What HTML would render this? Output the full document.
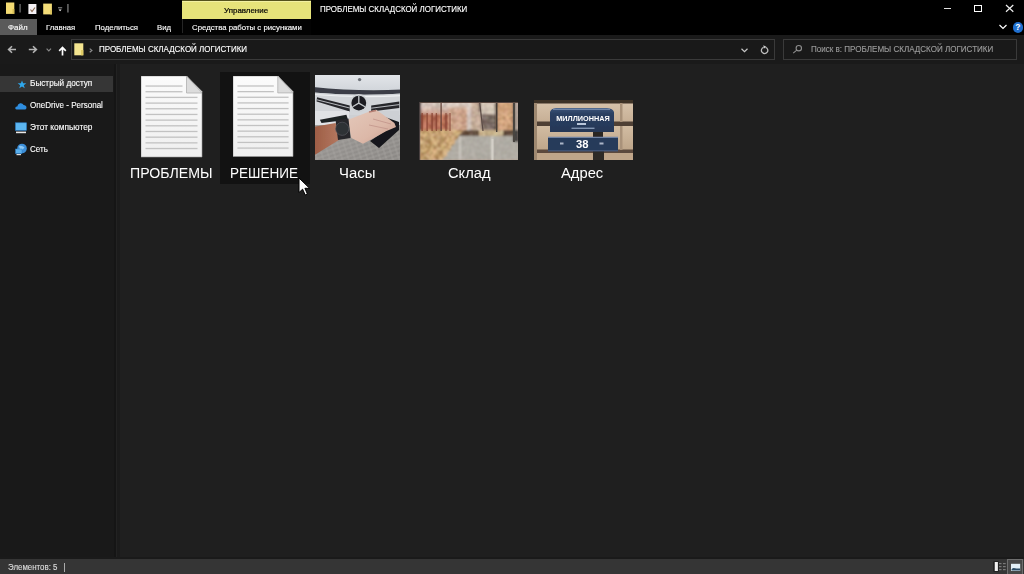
<!DOCTYPE html>
<html><head><meta charset="utf-8">
<style>
*{margin:0;padding:0;box-sizing:border-box}
html,body{width:1024px;height:574px;overflow:hidden;background:#1f1f1f;font-family:"Liberation Sans",sans-serif;color:#fff}
.a{position:absolute}
.t{position:absolute;white-space:nowrap;line-height:1;-webkit-text-stroke:0.12px currentColor}
.lbl{-webkit-text-stroke:0px currentColor}
</style></head><body>
<!-- title bar -->
<div class="a" style="left:0;top:0;width:1024px;height:35px;background:#000"></div>
<div class="a" id="yellow" style="left:182px;top:0;width:129px;height:19px;background:#e6e37a"></div><div class="a" style="left:182px;top:0;width:129px;height:1px;background:#55531c"></div><div class="a" style="left:182px;top:1px;width:129px;height:1px;background:#f3f1a2"></div>
<div class="a" style="left:182px;top:19px;width:129px;height:16px;background:#030303"></div><div class="a" style="left:182px;top:19px;width:1px;height:14px;background:#262626"></div>
<div class="a" style="left:0;top:19px;width:37px;height:16px;background:#5a5a5a"></div>

<!-- quick access icons -->
<svg class="a" style="left:0;top:0" width="80" height="18" viewBox="0 0 80 18">
<rect x="6" y="2.5" width="8.3" height="11.4" fill="#f3da72"/>
<rect x="12.5" y="9" width="1.8" height="4.9" fill="#d8bd55"/>
<rect x="19.3" y="4" width="1.6" height="8.5" fill="#5a5a5a"/>
<rect x="28.4" y="4" width="8" height="10" fill="#f4f0f4"/>
<path d="M30.5 9.5L32 11.5L35 7.5" stroke="#8a6a50" stroke-width="1.1" fill="none"/>
<rect x="43.2" y="3.6" width="8.7" height="10.8" fill="#f3dc78"/>
<rect x="50.2" y="10" width="1.7" height="4.4" fill="#d8bf5a"/>
<rect x="58" y="7" width="4.2" height="1.4" fill="#6a6a6a"/>
<path d="M58.6 9.6H61.6L60.1 11.3Z" fill="#fff"/>
<rect x="67" y="4" width="1.8" height="8.5" fill="#5a5a5a"/>
</svg>
<!-- window controls -->
<div class="a" style="left:944px;top:8px;width:7px;height:1px;background:#e0e0e0"></div>
<div class="a" style="left:974px;top:5px;width:8px;height:7px;border:1px solid #fff"></div>
<svg class="a" style="left:1005px;top:4px" width="10" height="9"><path d="M1 1L8.3 7.7M8.3 1L1 7.7" stroke="#f0f0f0" stroke-width="1.2"/></svg>
<svg class="a" style="left:999px;top:24px" width="8" height="6"><path d="M0.5 1L4 4.5L7.5 1" stroke="#fff" stroke-width="1.2" fill="none"/></svg>
<div class="a" style="left:1012.5px;top:22px;width:10.5px;height:10.5px;border-radius:50%;background:#1f6fd0"></div>
<div class="a" style="left:1012.5px;top:22px;width:10.5px;height:10.5px;line-height:10.5px;text-align:center;font-size:8.5px;font-weight:bold;color:#fff;font-family:'Liberation Sans',sans-serif">?</div>

<!-- address row -->
<div class="a" style="left:0;top:35px;width:1024px;height:29px;background:#1a1a1a"></div>
<svg class="a" style="left:7px;top:45px" width="10" height="9"><path d="M9 4.5H1.8M5 1.2L1.6 4.5L5 7.8" stroke="#b4b4b4" stroke-width="1.6" fill="none"/></svg>
<svg class="a" style="left:27.5px;top:45px" width="10" height="9"><path d="M0.8 4.5H8.2M5 1.2L8.4 4.5L5 7.8" stroke="#b4b4b4" stroke-width="1.6" fill="none"/></svg>
<svg class="a" style="left:45.5px;top:47.5px" width="6" height="4"><path d="M0.6 0.6L2.8 2.8L5 0.6" stroke="#8a8a8a" stroke-width="1.2" fill="none"/></svg>
<svg class="a" style="left:58px;top:45.5px" width="9" height="10"><path d="M4.5 9.5V1.8M1.2 4.8L4.5 1.5L7.8 4.8" stroke="#fff" stroke-width="1.7" fill="none"/></svg>
<div class="a" style="left:71px;top:39px;width:704px;height:21px;border:1px solid #3a3a3a;background:#191919"></div>
<svg class="a" style="left:74px;top:42.5px" width="10" height="13"><rect x="0.3" y="0.3" width="9" height="12" fill="#f4e590"/><rect x="7" y="7" width="2.3" height="5.3" fill="#e0cc66"/></svg>
<svg class="a" style="left:88.5px;top:47.5px" width="4" height="5"><path d="M0.7 0.6L2.9 2.4L0.7 4.2" stroke="#8e8e8e" stroke-width="1.2" fill="none"/></svg>
<svg class="a" style="left:740.5px;top:48px" width="7" height="5"><path d="M0.5 0.8L3.5 3.6L6.5 0.8" stroke="#c8c8c8" stroke-width="1.2" fill="none"/></svg>
<svg class="a" style="left:760px;top:45px" width="9" height="10"><path d="M3.6 2.3A3.2 3.2 0 1 0 5.6 2.3" stroke="#bdbdbd" stroke-width="1.3" fill="none"/><path d="M3.3 0.2L6.4 1.8L4 3.6Z" fill="#cfcfcf"/></svg>
<div class="a" style="left:783px;top:39px;width:234px;height:21px;border:1px solid #3a3a3a;background:#191919"></div>
<svg class="a" style="left:792px;top:44px" width="11" height="11"><circle cx="6.8" cy="4.2" r="2.7" stroke="#8e8e8e" stroke-width="1.1" fill="none"/><path d="M4.8 6.2L1.2 9.2" stroke="#8e8e8e" stroke-width="1.1"/></svg>

<!-- nav pane -->
<div class="a" style="left:0;top:64px;width:115px;height:495px;background:#191919"></div>
<div class="a" style="left:114px;top:64px;width:1.5px;height:495px;background:#151515"></div><div class="a" style="left:115.5px;top:64px;width:2px;height:495px;background:#222222"></div><div class="a" style="left:117px;top:64px;width:3px;height:495px;background:#1b1b1b"></div>
<div class="a" style="left:0;top:76px;width:113px;height:16px;background:#363636"></div>


<!-- nav icons -->
<svg class="a" style="left:17px;top:79.5px" width="10" height="9" viewBox="0 0 12 11"><path d="M6 0.5L7.4 4H11.3L8.2 6.4L9.4 10.2L6 7.9L2.6 10.2L3.8 6.4L0.7 4H4.6Z" fill="#2ea6ea"/></svg>
<svg class="a" style="left:15px;top:101px" width="12" height="9" viewBox="0 0 12 9"><path d="M1.5 8.5Q0 8.5 0.3 6.8Q0.7 5.3 2.3 5.4Q2.6 3 5 2.3Q7.5 1.8 8.6 4Q10.5 3.9 11.3 5.6Q12 8.3 10 8.5Z" fill="#2f8ee0"/></svg>
<svg class="a" style="left:15px;top:122px" width="12" height="12" viewBox="0 0 12 12"><rect x="0.5" y="0.8" width="11" height="7.5" fill="#5cb6f0" stroke="#2b7fc8" stroke-width="0.6"/><rect x="1" y="9.6" width="10" height="1.6" fill="#e8e8e8"/></svg>
<svg class="a" style="left:15px;top:143px" width="12" height="13" viewBox="0 0 12 13"><circle cx="7" cy="5.5" r="4.8" fill="#3d8fd8"/><path d="M4 3Q7 2 9.5 4.5Q8 7 5 7Z" fill="#8cc8f4"/><rect x="0.5" y="6" width="6.5" height="4.6" fill="#59b0ee" stroke="#2f7cc4" stroke-width="0.5"/><rect x="1.5" y="11" width="4.5" height="1.2" fill="#ddd"/></svg>
<!-- content -->
<div class="a" style="left:120px;top:64px;width:904px;height:495px;background:#1f1f1f"></div><div class="a" style="left:0;top:557px;width:1024px;height:2px;background:#1a1a1a"></div>
<div class="a" style="left:220px;top:72px;width:90px;height:112px;background:#121212"></div>


<!-- doc icons -->
<svg class="a" style="left:141px;top:76px" width="62" height="82" viewBox="0 0 62 82"><defs><linearGradient id="pg" x1="0" y1="0" x2="0" y2="1"><stop offset="0" stop-color="#fbfbfb"/><stop offset="1" stop-color="#efefef"/></linearGradient></defs>
<path d="M0 0H45.5L61 15.5V81H0Z" fill="url(#pg)" stroke="#9a9a9a" stroke-width="0.6"/>
<rect x="4.5" y="9.40" width="37.0" height="1.3" fill="#c2c2c2"/><rect x="4.5" y="15.08" width="37.0" height="1.3" fill="#c2c2c2"/><rect x="4.5" y="20.76" width="52.0" height="1.3" fill="#c2c2c2"/><rect x="4.5" y="26.44" width="52.0" height="1.3" fill="#c2c2c2"/><rect x="4.5" y="32.12" width="52.0" height="1.3" fill="#c2c2c2"/><rect x="4.5" y="37.80" width="52.0" height="1.3" fill="#c2c2c2"/><rect x="4.5" y="43.48" width="52.0" height="1.3" fill="#c2c2c2"/><rect x="4.5" y="49.16" width="52.0" height="1.3" fill="#c2c2c2"/><rect x="4.5" y="54.84" width="52.0" height="1.3" fill="#c2c2c2"/><rect x="4.5" y="60.52" width="52.0" height="1.3" fill="#c2c2c2"/><rect x="4.5" y="66.20" width="52.0" height="1.3" fill="#c2c2c2"/><rect x="4.5" y="71.88" width="52.0" height="1.3" fill="#c2c2c2"/>
<path d="M45.5 0V17H61Z" fill="#dcdcdc" stroke="#b0b0b0" stroke-width="0.8"/></svg>
<svg class="a" style="left:232.8px;top:76px" width="61" height="81.5" viewBox="0 0 62 82" preserveAspectRatio="none"><defs><linearGradient id="pg2" x1="0" y1="0" x2="0" y2="1"><stop offset="0" stop-color="#fbfbfb"/><stop offset="1" stop-color="#efefef"/></linearGradient></defs>
<path d="M0 0H45.5L61 15.5V81H0Z" fill="url(#pg2)" stroke="#9a9a9a" stroke-width="0.6"/>
<rect x="4.5" y="9.40" width="37.0" height="1.3" fill="#c2c2c2"/><rect x="4.5" y="15.08" width="37.0" height="1.3" fill="#c2c2c2"/><rect x="4.5" y="20.76" width="52.0" height="1.3" fill="#c2c2c2"/><rect x="4.5" y="26.44" width="52.0" height="1.3" fill="#c2c2c2"/><rect x="4.5" y="32.12" width="52.0" height="1.3" fill="#c2c2c2"/><rect x="4.5" y="37.80" width="52.0" height="1.3" fill="#c2c2c2"/><rect x="4.5" y="43.48" width="52.0" height="1.3" fill="#c2c2c2"/><rect x="4.5" y="49.16" width="52.0" height="1.3" fill="#c2c2c2"/><rect x="4.5" y="54.84" width="52.0" height="1.3" fill="#c2c2c2"/><rect x="4.5" y="60.52" width="52.0" height="1.3" fill="#c2c2c2"/><rect x="4.5" y="66.20" width="52.0" height="1.3" fill="#c2c2c2"/><rect x="4.5" y="71.88" width="52.0" height="1.3" fill="#c2c2c2"/>
<path d="M45.5 0V17H61Z" fill="#dcdcdc" stroke="#b0b0b0" stroke-width="0.8"/></svg>
<!-- Часы photo -->
<svg class="a" style="left:315px;top:75px" width="85" height="85" viewBox="0 0 85 85">
<defs><filter id="bl1" x="-5%" y="-5%" width="110%" height="110%"><feGaussianBlur stdDeviation="0.6"/></filter>
<linearGradient id="hood" x1="0" y1="0" x2="0" y2="1"><stop offset="0" stop-color="#e4e7eb"/><stop offset="1" stop-color="#d2d6db"/></linearGradient>
<linearGradient id="pave" x1="0" y1="0" x2="1" y2="1"><stop offset="0" stop-color="#9d9a97"/><stop offset="1" stop-color="#8a8784"/></linearGradient>
<linearGradient id="arm" x1="0" y1="0" x2="1" y2="0"><stop offset="0" stop-color="#9c5c44"/><stop offset="1" stop-color="#b47860"/></linearGradient>
<linearGradient id="skin" x1="0" y1="0" x2="1" y2="1"><stop offset="0" stop-color="#e4c8ba"/><stop offset="0.6" stop-color="#dcb8a8"/><stop offset="1" stop-color="#c8988a"/></linearGradient>
<pattern id="pv" width="6" height="4" patternUnits="userSpaceOnUse" patternTransform="rotate(-18)"><rect width="6" height="4" fill="none" stroke="#aeaba7" stroke-width="0.5"/></pattern>
<clipPath id="c1"><rect width="85" height="85"/></clipPath></defs>
<g clip-path="url(#c1)"><g filter="url(#bl1)">
<rect x="-2" y="-2" width="90" height="90" fill="#cdd0d4"/>
<rect x="-2" y="-2" width="90" height="17" fill="url(#hood)"/>
<circle cx="44.6" cy="4.6" r="1.7" fill="#6e737a"/>
<path d="M-2 12Q44 17 88 14.5V18.5Q44 21.5 -2 17.5Z" fill="#3a3e46"/>
<path d="M-2 17.5Q44 21.5 88 18.5V40H-2Z" fill="#d2d5d9"/>
<path d="M-2 19.5Q44 23 88 20.5" stroke="#eef0f2" stroke-width="1.2" fill="none"/>
<path d="M2 22.3L34.7 30.6V36.4L1.6 26.5Z" fill="#25272c"/>
<path d="M2 24.8L34.7 33" stroke="#c8cbcf" stroke-width="0.9"/>
<path d="M56.2 30.6L84.3 26.5V33L56.2 36.4Z" fill="#25272c"/>
<path d="M56.2 33.2L84.3 29.6" stroke="#c8cbcf" stroke-width="0.9"/>
<circle cx="43.8" cy="28.1" r="9.1" fill="#cfd2d6"/>
<circle cx="43.8" cy="28.1" r="7.4" fill="#1d1f23"/>
<path d="M43.8 20.9V28.1L37.6 31.7M43.8 28.1L50 31.7" stroke="#c6c9cd" stroke-width="1.3" fill="none"/>
<path d="M-2 36H34V50H-2Z" fill="#e0e2e5"/>
<path d="M84 36H56V50H84Z" fill="#cdd0d4"/>
<path d="M4.9 44.7L31.4 39.7L33 44.7L6.5 48Z" fill="#1e2024"/>
<rect x="-2" y="50" width="90" height="38" fill="url(#pave)"/>
<rect x="-2" y="50" width="90" height="38" fill="url(#pv)"/>
<path d="M70 42L84 47V55L64 73L55 66L70 56Z" fill="#17181b"/>
<path d="M-2 52L20.6 48L24.7 64.5L-2 81Z" fill="url(#arm)"/>
<path d="M33 44.7L54.5 36.4L61.2 34.7L72.7 43L79.4 48L81 52L71 56.3L56.2 64.5L48 68.7L36.3 62.9Z" fill="url(#skin)"/>
<path d="M54 37L61 35.5" stroke="#b57e72" stroke-width="1.6" fill="none"/>
<path d="M58 44L76 49M54 50L73 54" stroke="#c1948a" stroke-width="0.8" fill="none"/>
<path d="M20.6 45.5L33.5 43.5L35.5 62.9L23 65Z" fill="#26272a"/>
<circle cx="27.2" cy="53.8" r="6.6" fill="#2f3136"/>
<circle cx="27.2" cy="53.8" r="6.6" fill="none" stroke="#5a5d63" stroke-width="0.6"/>
</g></g>
</svg>

<!-- Склад photo -->
<svg class="a" style="left:419px;top:102px" width="99" height="58" viewBox="0 0 99 58">
<defs><filter id="bl2" x="-5%" y="-5%" width="110%" height="110%"><feGaussianBlur stdDeviation="0.9"/></filter>
<filter id="bl2b" x="-5%" y="-5%" width="110%" height="110%"><feGaussianBlur stdDeviation="0.45"/></filter>
<clipPath id="c2"><rect width="99" height="58"/></clipPath></defs>
<g clip-path="url(#c2)"><g filter="url(#bl2)" shape-rendering="crispEdges">
<rect x="-2" y="-2" width="103" height="62" fill="#b8a090"/>
<rect x="0" y="0" width="2" height="2" fill="#4f433e"/><rect x="2" y="0" width="2" height="2" fill="#beacaa"/><rect x="4" y="0" width="2" height="2" fill="#ecdbcf"/><rect x="6" y="0" width="2" height="2" fill="#c2b0ac"/><rect x="8" y="0" width="2" height="2" fill="#daccc2"/><rect x="10" y="0" width="2" height="2" fill="#e6d3ca"/><rect x="12" y="0" width="2" height="2" fill="#d2beba"/><rect x="14" y="0" width="2" height="2" fill="#e7dccf"/><rect x="16" y="0" width="2" height="2" fill="#c5b7b4"/><rect x="18" y="0" width="2" height="2" fill="#bcb2a5"/><rect x="20" y="0" width="2" height="2" fill="#dcd0c4"/><rect x="22" y="0" width="2" height="2" fill="#edd9d6"/><rect x="24" y="0" width="2" height="2" fill="#d7cfc0"/><rect x="26" y="0" width="2" height="2" fill="#c6b6b2"/><rect x="28" y="0" width="2" height="2" fill="#d5c1ba"/><rect x="30" y="0" width="2" height="2" fill="#e9d7cc"/><rect x="32" y="0" width="2" height="2" fill="#ebdbd0"/><rect x="34" y="0" width="2" height="2" fill="#ccbbb5"/><rect x="36" y="0" width="2" height="2" fill="#dccfc7"/><rect x="38" y="0" width="2" height="2" fill="#e5d6cd"/><rect x="40" y="0" width="2" height="2" fill="#d1bfb7"/><rect x="42" y="0" width="2" height="2" fill="#decdc2"/><rect x="44" y="0" width="2" height="2" fill="#e5dcd1"/><rect x="46" y="0" width="2" height="2" fill="#c4b7af"/><rect x="48" y="0" width="2" height="2" fill="#e3d7d0"/><rect x="50" y="0" width="2" height="2" fill="#e3d5cc"/><rect x="52" y="0" width="2" height="2" fill="#d0b8a3"/><rect x="54" y="0" width="2" height="2" fill="#c5a79a"/><rect x="56" y="0" width="2" height="2" fill="#baa08e"/><rect x="58" y="0" width="2" height="2" fill="#bda18e"/><rect x="60" y="0" width="2" height="2" fill="#5f504a"/><rect x="62" y="0" width="2" height="2" fill="#e5d8c8"/><rect x="64" y="0" width="2" height="2" fill="#e6d9c7"/><rect x="66" y="0" width="2" height="2" fill="#c9bcad"/><rect x="68" y="0" width="2" height="2" fill="#d0c2ba"/><rect x="70" y="0" width="2" height="2" fill="#d0bcaf"/><rect x="72" y="0" width="2" height="2" fill="#c8b9af"/><rect x="74" y="0" width="2" height="2" fill="#e6d6c4"/><rect x="76" y="0" width="2" height="2" fill="#463a36"/><rect x="78" y="0" width="2" height="2" fill="#d5a583"/><rect x="80" y="0" width="2" height="2" fill="#d5ac87"/><rect x="82" y="0" width="2" height="2" fill="#e5b98e"/><rect x="84" y="0" width="2" height="2" fill="#e0b389"/><rect x="86" y="0" width="2" height="2" fill="#d1a080"/><rect x="88" y="0" width="2" height="2" fill="#ca9f76"/><rect x="90" y="0" width="2" height="2" fill="#daaf8d"/><rect x="92" y="0" width="2" height="2" fill="#dcae8a"/><rect x="94" y="0" width="2" height="2" fill="#514944"/><rect x="96" y="0" width="2" height="2" fill="#b4a69e"/><rect x="98" y="0" width="2" height="2" fill="#c1b2a6"/><rect x="0" y="2" width="2" height="2" fill="#4a3d39"/><rect x="2" y="2" width="2" height="2" fill="#d9cdc4"/><rect x="4" y="2" width="2" height="2" fill="#cfc2bd"/><rect x="6" y="2" width="2" height="2" fill="#c5b8a9"/><rect x="8" y="2" width="2" height="2" fill="#c8b5ad"/><rect x="10" y="2" width="2" height="2" fill="#c1afa6"/><rect x="12" y="2" width="2" height="2" fill="#d0bcb5"/><rect x="14" y="2" width="2" height="2" fill="#e6d8ca"/><rect x="16" y="2" width="2" height="2" fill="#c9beb0"/><rect x="18" y="2" width="2" height="2" fill="#c9b5ab"/><rect x="20" y="2" width="2" height="2" fill="#c0b3a5"/><rect x="22" y="2" width="2" height="2" fill="#e7dad5"/><rect x="24" y="2" width="2" height="2" fill="#bbaba7"/><rect x="26" y="2" width="2" height="2" fill="#c2b7b0"/><rect x="28" y="2" width="2" height="2" fill="#e9dcd0"/><rect x="30" y="2" width="2" height="2" fill="#d6cdc4"/><rect x="32" y="2" width="2" height="2" fill="#cfc1ba"/><rect x="34" y="2" width="2" height="2" fill="#e1d1c5"/><rect x="36" y="2" width="2" height="2" fill="#e1d7cc"/><rect x="38" y="2" width="2" height="2" fill="#e9dad0"/><rect x="40" y="2" width="2" height="2" fill="#c2b5a8"/><rect x="42" y="2" width="2" height="2" fill="#cdbdb1"/><rect x="44" y="2" width="2" height="2" fill="#d4c4ba"/><rect x="46" y="2" width="2" height="2" fill="#dccbc2"/><rect x="48" y="2" width="2" height="2" fill="#c6bcb2"/><rect x="50" y="2" width="2" height="2" fill="#e8dbce"/><rect x="52" y="2" width="2" height="2" fill="#d8c2ad"/><rect x="54" y="2" width="2" height="2" fill="#dbc4b1"/><rect x="56" y="2" width="2" height="2" fill="#c7b29c"/><rect x="58" y="2" width="2" height="2" fill="#b79c8d"/><rect x="60" y="2" width="2" height="2" fill="#5f524c"/><rect x="62" y="2" width="2" height="2" fill="#dacaba"/><rect x="64" y="2" width="2" height="2" fill="#c6b7a7"/><rect x="66" y="2" width="2" height="2" fill="#d4c5b5"/><rect x="68" y="2" width="2" height="2" fill="#daccbc"/><rect x="70" y="2" width="2" height="2" fill="#e2d2c4"/><rect x="72" y="2" width="2" height="2" fill="#ddcbbd"/><rect x="74" y="2" width="2" height="2" fill="#bfb3a6"/><rect x="76" y="2" width="2" height="2" fill="#3f3631"/><rect x="78" y="2" width="2" height="2" fill="#bb926d"/><rect x="80" y="2" width="2" height="2" fill="#d6a480"/><rect x="82" y="2" width="2" height="2" fill="#daa683"/><rect x="84" y="2" width="2" height="2" fill="#c19c6e"/><rect x="86" y="2" width="2" height="2" fill="#d5ad80"/><rect x="88" y="2" width="2" height="2" fill="#c4966c"/><rect x="90" y="2" width="2" height="2" fill="#c19a73"/><rect x="92" y="2" width="2" height="2" fill="#cc9a74"/><rect x="94" y="2" width="2" height="2" fill="#514a44"/><rect x="96" y="2" width="2" height="2" fill="#b7a69e"/><rect x="98" y="2" width="2" height="2" fill="#bdada5"/><rect x="0" y="4" width="2" height="2" fill="#524542"/><rect x="2" y="4" width="2" height="2" fill="#e1c7c2"/><rect x="4" y="4" width="2" height="2" fill="#c3b4a9"/><rect x="6" y="4" width="2" height="2" fill="#ead5cc"/><rect x="8" y="4" width="2" height="2" fill="#d0bcb4"/><rect x="10" y="4" width="2" height="2" fill="#ead5cd"/><rect x="12" y="4" width="2" height="2" fill="#c3b1a3"/><rect x="14" y="4" width="2" height="2" fill="#ccb1a9"/><rect x="16" y="4" width="2" height="2" fill="#bfafa6"/><rect x="18" y="4" width="2" height="2" fill="#c0ada7"/><rect x="20" y="4" width="2" height="2" fill="#c5b6a9"/><rect x="22" y="4" width="2" height="2" fill="#cab6a8"/><rect x="24" y="4" width="2" height="2" fill="#c1b5aa"/><rect x="26" y="4" width="2" height="2" fill="#cbb5a8"/><rect x="28" y="4" width="2" height="2" fill="#e2cec1"/><rect x="30" y="4" width="2" height="2" fill="#e2cabd"/><rect x="32" y="4" width="2" height="2" fill="#dac7b7"/><rect x="34" y="4" width="2" height="2" fill="#d8c2b2"/><rect x="36" y="4" width="2" height="2" fill="#ccb1a4"/><rect x="38" y="4" width="2" height="2" fill="#d4b9ae"/><rect x="40" y="4" width="2" height="2" fill="#cab3a0"/><rect x="42" y="4" width="2" height="2" fill="#d4baa9"/><rect x="44" y="4" width="2" height="2" fill="#c7ae9b"/><rect x="46" y="4" width="2" height="2" fill="#d5bdaf"/><rect x="48" y="4" width="2" height="2" fill="#daccc7"/><rect x="50" y="4" width="2" height="2" fill="#dcd1c5"/><rect x="52" y="4" width="2" height="2" fill="#cdb7a8"/><rect x="54" y="4" width="2" height="2" fill="#b29c86"/><rect x="56" y="4" width="2" height="2" fill="#cfb7a1"/><rect x="58" y="4" width="2" height="2" fill="#c2ad98"/><rect x="60" y="4" width="2" height="2" fill="#574842"/><rect x="62" y="4" width="2" height="2" fill="#e4d3c9"/><rect x="64" y="4" width="2" height="2" fill="#d3c9bd"/><rect x="66" y="4" width="2" height="2" fill="#ccbcab"/><rect x="68" y="4" width="2" height="2" fill="#ddd3c1"/><rect x="70" y="4" width="2" height="2" fill="#c9b9ab"/><rect x="72" y="4" width="2" height="2" fill="#ecddcb"/><rect x="74" y="4" width="2" height="2" fill="#cbbfac"/><rect x="76" y="4" width="2" height="2" fill="#423832"/><rect x="78" y="4" width="2" height="2" fill="#c79c6e"/><rect x="80" y="4" width="2" height="2" fill="#c79673"/><rect x="82" y="4" width="2" height="2" fill="#d0a97e"/><rect x="84" y="4" width="2" height="2" fill="#c99c77"/><rect x="86" y="4" width="2" height="2" fill="#e3b28c"/><rect x="88" y="4" width="2" height="2" fill="#cda579"/><rect x="90" y="4" width="2" height="2" fill="#daaf85"/><rect x="92" y="4" width="2" height="2" fill="#ca9c72"/><rect x="94" y="4" width="2" height="2" fill="#524a44"/><rect x="96" y="4" width="2" height="2" fill="#bdb0a3"/><rect x="98" y="4" width="2" height="2" fill="#aa978f"/><rect x="0" y="6" width="2" height="2" fill="#4c403e"/><rect x="2" y="6" width="2" height="2" fill="#d0b5b0"/><rect x="4" y="6" width="2" height="2" fill="#e6cabe"/><rect x="6" y="6" width="2" height="2" fill="#dfc5b6"/><rect x="8" y="6" width="2" height="2" fill="#d3beab"/><rect x="10" y="6" width="2" height="2" fill="#e6cab9"/><rect x="12" y="6" width="2" height="2" fill="#b89f95"/><rect x="14" y="6" width="2" height="2" fill="#dabcb2"/><rect x="16" y="6" width="2" height="2" fill="#c9ac9d"/><rect x="18" y="6" width="2" height="2" fill="#cdb2a2"/><rect x="20" y="6" width="2" height="2" fill="#dbc2b9"/><rect x="22" y="6" width="2" height="2" fill="#c3aa95"/><rect x="24" y="6" width="2" height="2" fill="#e4c7be"/><rect x="26" y="6" width="2" height="2" fill="#ddc3b9"/><rect x="28" y="6" width="2" height="2" fill="#c2a299"/><rect x="30" y="6" width="2" height="2" fill="#dcb6a1"/><rect x="32" y="6" width="2" height="2" fill="#bb9a83"/><rect x="34" y="6" width="2" height="2" fill="#ba9781"/><rect x="36" y="6" width="2" height="2" fill="#e0bda9"/><rect x="38" y="6" width="2" height="2" fill="#ba9982"/><rect x="40" y="6" width="2" height="2" fill="#d9b7a1"/><rect x="42" y="6" width="2" height="2" fill="#bb9881"/><rect x="44" y="6" width="2" height="2" fill="#ddb4a0"/><rect x="46" y="6" width="2" height="2" fill="#dcbba4"/><rect x="48" y="6" width="2" height="2" fill="#e8dacf"/><rect x="50" y="6" width="2" height="2" fill="#d7c5bd"/><rect x="52" y="6" width="2" height="2" fill="#c2a594"/><rect x="54" y="6" width="2" height="2" fill="#d8c0b0"/><rect x="56" y="6" width="2" height="2" fill="#bba690"/><rect x="58" y="6" width="2" height="2" fill="#bca893"/><rect x="60" y="6" width="2" height="2" fill="#54443f"/><rect x="62" y="6" width="2" height="2" fill="#d4c5b3"/><rect x="64" y="6" width="2" height="2" fill="#d2c3b7"/><rect x="66" y="6" width="2" height="2" fill="#c7b5aa"/><rect x="68" y="6" width="2" height="2" fill="#c7baaf"/><rect x="70" y="6" width="2" height="2" fill="#d5cbba"/><rect x="72" y="6" width="2" height="2" fill="#c8bdac"/><rect x="74" y="6" width="2" height="2" fill="#ccbdad"/><rect x="76" y="6" width="2" height="2" fill="#4b3f3b"/><rect x="78" y="6" width="2" height="2" fill="#daac80"/><rect x="80" y="6" width="2" height="2" fill="#c29872"/><rect x="82" y="6" width="2" height="2" fill="#c79776"/><rect x="84" y="6" width="2" height="2" fill="#c59c77"/><rect x="86" y="6" width="2" height="2" fill="#c59572"/><rect x="88" y="6" width="2" height="2" fill="#c99b73"/><rect x="90" y="6" width="2" height="2" fill="#c18f6c"/><rect x="92" y="6" width="2" height="2" fill="#d5a67f"/><rect x="94" y="6" width="2" height="2" fill="#524b44"/><rect x="96" y="6" width="2" height="2" fill="#b3a49d"/><rect x="98" y="6" width="2" height="2" fill="#b7a7a0"/><rect x="0" y="8" width="2" height="2" fill="#524642"/><rect x="2" y="8" width="2" height="2" fill="#c8a296"/><rect x="4" y="8" width="2" height="2" fill="#dabcab"/><rect x="6" y="8" width="2" height="2" fill="#d9b5a6"/><rect x="8" y="8" width="2" height="2" fill="#b79586"/><rect x="10" y="8" width="2" height="2" fill="#dab5ac"/><rect x="12" y="8" width="2" height="2" fill="#cfaa9e"/><rect x="14" y="8" width="2" height="2" fill="#c7a696"/><rect x="16" y="8" width="2" height="2" fill="#d5b49e"/><rect x="18" y="8" width="2" height="2" fill="#b99c90"/><rect x="20" y="8" width="2" height="2" fill="#caa69b"/><rect x="22" y="8" width="2" height="2" fill="#b6978b"/><rect x="24" y="8" width="2" height="2" fill="#b69483"/><rect x="26" y="8" width="2" height="2" fill="#c1a193"/><rect x="28" y="8" width="2" height="2" fill="#d1aa9b"/><rect x="30" y="8" width="2" height="2" fill="#c8a286"/><rect x="32" y="8" width="2" height="2" fill="#be987e"/><rect x="34" y="8" width="2" height="2" fill="#e0b69d"/><rect x="36" y="8" width="2" height="2" fill="#e0b7a2"/><rect x="38" y="8" width="2" height="2" fill="#d6ab98"/><rect x="40" y="8" width="2" height="2" fill="#e0b399"/><rect x="42" y="8" width="2" height="2" fill="#c79b84"/><rect x="44" y="8" width="2" height="2" fill="#b38d74"/><rect x="46" y="8" width="2" height="2" fill="#e0ba99"/><rect x="48" y="8" width="2" height="2" fill="#cfbcb7"/><rect x="50" y="8" width="2" height="2" fill="#ddccc6"/><rect x="52" y="8" width="2" height="2" fill="#b9a394"/><rect x="54" y="8" width="2" height="2" fill="#ccb3a0"/><rect x="56" y="8" width="2" height="2" fill="#c5ac9b"/><rect x="58" y="8" width="2" height="2" fill="#bfa196"/><rect x="60" y="8" width="2" height="2" fill="#594844"/><rect x="62" y="8" width="2" height="2" fill="#c7beaa"/><rect x="64" y="8" width="2" height="2" fill="#cabeb0"/><rect x="66" y="8" width="2" height="2" fill="#c8b9a9"/><rect x="68" y="8" width="2" height="2" fill="#cbbdae"/><rect x="70" y="8" width="2" height="2" fill="#dacfbb"/><rect x="72" y="8" width="2" height="2" fill="#cfc3b1"/><rect x="74" y="8" width="2" height="2" fill="#d3caba"/><rect x="76" y="8" width="2" height="2" fill="#473b38"/><rect x="78" y="8" width="2" height="2" fill="#caa074"/><rect x="80" y="8" width="2" height="2" fill="#d2a27a"/><rect x="82" y="8" width="2" height="2" fill="#d3a579"/><rect x="84" y="8" width="2" height="2" fill="#c79a6d"/><rect x="86" y="8" width="2" height="2" fill="#d7a285"/><rect x="88" y="8" width="2" height="2" fill="#d6ae86"/><rect x="90" y="8" width="2" height="2" fill="#d2a883"/><rect x="92" y="8" width="2" height="2" fill="#c79a7c"/><rect x="94" y="8" width="2" height="2" fill="#5c554e"/><rect x="96" y="8" width="2" height="2" fill="#b7aa9e"/><rect x="98" y="8" width="2" height="2" fill="#b09f97"/><rect x="0" y="10" width="2" height="2" fill="#554846"/><rect x="2" y="10" width="2" height="2" fill="#c49e8a"/><rect x="4" y="10" width="2" height="2" fill="#d5a998"/><rect x="6" y="10" width="2" height="2" fill="#c4a08e"/><rect x="8" y="10" width="2" height="2" fill="#dab3a1"/><rect x="10" y="10" width="2" height="2" fill="#e1b1a3"/><rect x="12" y="10" width="2" height="2" fill="#c2998a"/><rect x="14" y="10" width="2" height="2" fill="#dbb3a3"/><rect x="16" y="10" width="2" height="2" fill="#cfad94"/><rect x="18" y="10" width="2" height="2" fill="#d2aa9c"/><rect x="20" y="10" width="2" height="2" fill="#dbb39b"/><rect x="22" y="10" width="2" height="2" fill="#e3b3a3"/><rect x="24" y="10" width="2" height="2" fill="#d6af9a"/><rect x="26" y="10" width="2" height="2" fill="#c9a48d"/><rect x="28" y="10" width="2" height="2" fill="#c89e8f"/><rect x="30" y="10" width="2" height="2" fill="#e6bda6"/><rect x="32" y="10" width="2" height="2" fill="#af8d74"/><rect x="34" y="10" width="2" height="2" fill="#b08a77"/><rect x="36" y="10" width="2" height="2" fill="#c49e83"/><rect x="38" y="10" width="2" height="2" fill="#d8b194"/><rect x="40" y="10" width="2" height="2" fill="#c49880"/><rect x="42" y="10" width="2" height="2" fill="#c89d8b"/><rect x="44" y="10" width="2" height="2" fill="#c59c85"/><rect x="46" y="10" width="2" height="2" fill="#daad98"/><rect x="48" y="10" width="2" height="2" fill="#e5d8cf"/><rect x="50" y="10" width="2" height="2" fill="#cfc1bb"/><rect x="52" y="10" width="2" height="2" fill="#bda292"/><rect x="54" y="10" width="2" height="2" fill="#b59c85"/><rect x="56" y="10" width="2" height="2" fill="#c9b79e"/><rect x="58" y="10" width="2" height="2" fill="#c8b8a3"/><rect x="60" y="10" width="2" height="2" fill="#c3ae9a"/><rect x="62" y="10" width="2" height="2" fill="#dfd2c4"/><rect x="64" y="10" width="2" height="2" fill="#c1b8a9"/><rect x="66" y="10" width="2" height="2" fill="#d1c0b5"/><rect x="68" y="10" width="2" height="2" fill="#e1d8c8"/><rect x="70" y="10" width="2" height="2" fill="#e0cfc2"/><rect x="72" y="10" width="2" height="2" fill="#ddd2c2"/><rect x="74" y="10" width="2" height="2" fill="#d9cbbe"/><rect x="76" y="10" width="2" height="2" fill="#463b37"/><rect x="78" y="10" width="2" height="2" fill="#cea081"/><rect x="80" y="10" width="2" height="2" fill="#d4ab84"/><rect x="82" y="10" width="2" height="2" fill="#d7ac8b"/><rect x="84" y="10" width="2" height="2" fill="#ce9f81"/><rect x="86" y="10" width="2" height="2" fill="#daad8a"/><rect x="88" y="10" width="2" height="2" fill="#d5a880"/><rect x="90" y="10" width="2" height="2" fill="#c4966c"/><rect x="92" y="10" width="2" height="2" fill="#bd8f68"/><rect x="94" y="10" width="2" height="2" fill="#514b44"/><rect x="96" y="10" width="2" height="2" fill="#b6a69c"/><rect x="98" y="10" width="2" height="2" fill="#a9978f"/><rect x="0" y="12" width="2" height="2" fill="#544743"/><rect x="2" y="12" width="2" height="2" fill="#843c2b"/><rect x="4" y="12" width="2" height="2" fill="#ad5e4a"/><rect x="6" y="12" width="2" height="2" fill="#a46043"/><rect x="8" y="12" width="2" height="2" fill="#a65b44"/><rect x="10" y="12" width="2" height="2" fill="#c88163"/><rect x="12" y="12" width="2" height="2" fill="#8b4637"/><rect x="14" y="12" width="2" height="2" fill="#db9279"/><rect x="16" y="12" width="2" height="2" fill="#914b3d"/><rect x="18" y="12" width="2" height="2" fill="#a05f46"/><rect x="20" y="12" width="2" height="2" fill="#c88169"/><rect x="22" y="12" width="2" height="2" fill="#d3896b"/><rect x="24" y="12" width="2" height="2" fill="#ca856b"/><rect x="26" y="12" width="2" height="2" fill="#863d2e"/><rect x="28" y="12" width="2" height="2" fill="#b26e50"/><rect x="30" y="12" width="2" height="2" fill="#b99279"/><rect x="32" y="12" width="2" height="2" fill="#cba98b"/><rect x="34" y="12" width="2" height="2" fill="#c4a189"/><rect x="36" y="12" width="2" height="2" fill="#dab699"/><rect x="38" y="12" width="2" height="2" fill="#ce9f8a"/><rect x="40" y="12" width="2" height="2" fill="#b7957d"/><rect x="42" y="12" width="2" height="2" fill="#bb9676"/><rect x="44" y="12" width="2" height="2" fill="#ddb096"/><rect x="46" y="12" width="2" height="2" fill="#b38c71"/><rect x="48" y="12" width="2" height="2" fill="#d7c9c2"/><rect x="50" y="12" width="2" height="2" fill="#c9bdb7"/><rect x="52" y="12" width="2" height="2" fill="#bea395"/><rect x="54" y="12" width="2" height="2" fill="#d6bcaf"/><rect x="56" y="12" width="2" height="2" fill="#bda693"/><rect x="58" y="12" width="2" height="2" fill="#baa08e"/><rect x="60" y="12" width="2" height="2" fill="#b8a292"/><rect x="62" y="12" width="2" height="2" fill="#74695e"/><rect x="64" y="12" width="2" height="2" fill="#7a6462"/><rect x="66" y="12" width="2" height="2" fill="#856e65"/><rect x="68" y="12" width="2" height="2" fill="#715a50"/><rect x="70" y="12" width="2" height="2" fill="#836f66"/><rect x="72" y="12" width="2" height="2" fill="#857368"/><rect x="74" y="12" width="2" height="2" fill="#98897e"/><rect x="76" y="12" width="2" height="2" fill="#49413b"/><rect x="78" y="12" width="2" height="2" fill="#cc9d7c"/><rect x="80" y="12" width="2" height="2" fill="#c0926e"/><rect x="82" y="12" width="2" height="2" fill="#dbae82"/><rect x="84" y="12" width="2" height="2" fill="#dfb78f"/><rect x="86" y="12" width="2" height="2" fill="#e6b493"/><rect x="88" y="12" width="2" height="2" fill="#bf9771"/><rect x="90" y="12" width="2" height="2" fill="#d5b089"/><rect x="92" y="12" width="2" height="2" fill="#e7b891"/><rect x="94" y="12" width="2" height="2" fill="#58524c"/><rect x="96" y="12" width="2" height="2" fill="#ac9f95"/><rect x="98" y="12" width="2" height="2" fill="#beb2a7"/><rect x="0" y="14" width="2" height="2" fill="#4c403b"/><rect x="2" y="14" width="2" height="2" fill="#914a3d"/><rect x="4" y="14" width="2" height="2" fill="#a35d47"/><rect x="6" y="14" width="2" height="2" fill="#ae6b49"/><rect x="8" y="14" width="2" height="2" fill="#c27d62"/><rect x="10" y="14" width="2" height="2" fill="#bc7a59"/><rect x="12" y="14" width="2" height="2" fill="#924a3d"/><rect x="14" y="14" width="2" height="2" fill="#b6715c"/><rect x="16" y="14" width="2" height="2" fill="#873f2f"/><rect x="18" y="14" width="2" height="2" fill="#ba7257"/><rect x="20" y="14" width="2" height="2" fill="#a4583e"/><rect x="22" y="14" width="2" height="2" fill="#da8f76"/><rect x="24" y="14" width="2" height="2" fill="#b06e51"/><rect x="26" y="14" width="2" height="2" fill="#874030"/><rect x="28" y="14" width="2" height="2" fill="#b46a4f"/><rect x="30" y="14" width="2" height="2" fill="#e0b8a3"/><rect x="32" y="14" width="2" height="2" fill="#d8ac97"/><rect x="34" y="14" width="2" height="2" fill="#ca9f8b"/><rect x="36" y="14" width="2" height="2" fill="#d3af99"/><rect x="38" y="14" width="2" height="2" fill="#cc9c8a"/><rect x="40" y="14" width="2" height="2" fill="#ddb79f"/><rect x="42" y="14" width="2" height="2" fill="#c1987f"/><rect x="44" y="14" width="2" height="2" fill="#c59f80"/><rect x="46" y="14" width="2" height="2" fill="#bc967b"/><rect x="48" y="14" width="2" height="2" fill="#cabbb3"/><rect x="50" y="14" width="2" height="2" fill="#d2c0b9"/><rect x="52" y="14" width="2" height="2" fill="#bea695"/><rect x="54" y="14" width="2" height="2" fill="#b39f8d"/><rect x="56" y="14" width="2" height="2" fill="#b49b84"/><rect x="58" y="14" width="2" height="2" fill="#d8bbac"/><rect x="60" y="14" width="2" height="2" fill="#b79e8c"/><rect x="62" y="14" width="2" height="2" fill="#988884"/><rect x="64" y="14" width="2" height="2" fill="#7b6f68"/><rect x="66" y="14" width="2" height="2" fill="#887f77"/><rect x="68" y="14" width="2" height="2" fill="#877e70"/><rect x="70" y="14" width="2" height="2" fill="#645755"/><rect x="72" y="14" width="2" height="2" fill="#655b4e"/><rect x="74" y="14" width="2" height="2" fill="#75645e"/><rect x="76" y="14" width="2" height="2" fill="#423733"/><rect x="78" y="14" width="2" height="2" fill="#e0b38b"/><rect x="80" y="14" width="2" height="2" fill="#d7a882"/><rect x="82" y="14" width="2" height="2" fill="#cea47f"/><rect x="84" y="14" width="2" height="2" fill="#b5865d"/><rect x="86" y="14" width="2" height="2" fill="#d9ac83"/><rect x="88" y="14" width="2" height="2" fill="#ecbe91"/><rect x="90" y="14" width="2" height="2" fill="#cca47a"/><rect x="92" y="14" width="2" height="2" fill="#ae8360"/><rect x="94" y="14" width="2" height="2" fill="#544d47"/><rect x="96" y="14" width="2" height="2" fill="#b7a9a0"/><rect x="98" y="14" width="2" height="2" fill="#a5988c"/><rect x="0" y="16" width="2" height="2" fill="#564946"/><rect x="2" y="16" width="2" height="2" fill="#904a3e"/><rect x="4" y="16" width="2" height="2" fill="#aa6747"/><rect x="6" y="16" width="2" height="2" fill="#c6815f"/><rect x="8" y="16" width="2" height="2" fill="#b2654e"/><rect x="10" y="16" width="2" height="2" fill="#d78970"/><rect x="12" y="16" width="2" height="2" fill="#934b3c"/><rect x="14" y="16" width="2" height="2" fill="#a55c43"/><rect x="16" y="16" width="2" height="2" fill="#884134"/><rect x="18" y="16" width="2" height="2" fill="#c07659"/><rect x="20" y="16" width="2" height="2" fill="#cd8770"/><rect x="22" y="16" width="2" height="2" fill="#ce806d"/><rect x="24" y="16" width="2" height="2" fill="#a75a3d"/><rect x="26" y="16" width="2" height="2" fill="#944e40"/><rect x="28" y="16" width="2" height="2" fill="#c27a64"/><rect x="30" y="16" width="2" height="2" fill="#cca588"/><rect x="32" y="16" width="2" height="2" fill="#b68b70"/><rect x="34" y="16" width="2" height="2" fill="#c89d87"/><rect x="36" y="16" width="2" height="2" fill="#c49c82"/><rect x="38" y="16" width="2" height="2" fill="#e2b4a3"/><rect x="40" y="16" width="2" height="2" fill="#d6ae92"/><rect x="42" y="16" width="2" height="2" fill="#d9aa93"/><rect x="44" y="16" width="2" height="2" fill="#b68b73"/><rect x="46" y="16" width="2" height="2" fill="#e4b59d"/><rect x="48" y="16" width="2" height="2" fill="#cbbcb2"/><rect x="50" y="16" width="2" height="2" fill="#d1c0b5"/><rect x="52" y="16" width="2" height="2" fill="#d3bca5"/><rect x="54" y="16" width="2" height="2" fill="#d1bba3"/><rect x="56" y="16" width="2" height="2" fill="#c8af9f"/><rect x="58" y="16" width="2" height="2" fill="#d2b2a0"/><rect x="60" y="16" width="2" height="2" fill="#cfb9a2"/><rect x="62" y="16" width="2" height="2" fill="#6c5d54"/><rect x="64" y="16" width="2" height="2" fill="#907e7b"/><rect x="66" y="16" width="2" height="2" fill="#887671"/><rect x="68" y="16" width="2" height="2" fill="#796e63"/><rect x="70" y="16" width="2" height="2" fill="#635851"/><rect x="72" y="16" width="2" height="2" fill="#7d7064"/><rect x="74" y="16" width="2" height="2" fill="#7d7362"/><rect x="76" y="16" width="2" height="2" fill="#403632"/><rect x="78" y="16" width="2" height="2" fill="#c9956d"/><rect x="80" y="16" width="2" height="2" fill="#bc8e61"/><rect x="82" y="16" width="2" height="2" fill="#ceaa7e"/><rect x="84" y="16" width="2" height="2" fill="#b48563"/><rect x="86" y="16" width="2" height="2" fill="#d2a383"/><rect x="88" y="16" width="2" height="2" fill="#e9b88f"/><rect x="90" y="16" width="2" height="2" fill="#b38260"/><rect x="92" y="16" width="2" height="2" fill="#ce9f7f"/><rect x="94" y="16" width="2" height="2" fill="#585049"/><rect x="96" y="16" width="2" height="2" fill="#b4a49a"/><rect x="98" y="16" width="2" height="2" fill="#aa9b91"/><rect x="0" y="18" width="2" height="2" fill="#564a46"/><rect x="2" y="18" width="2" height="2" fill="#874334"/><rect x="4" y="18" width="2" height="2" fill="#c37c60"/><rect x="6" y="18" width="2" height="2" fill="#b36b56"/><rect x="8" y="18" width="2" height="2" fill="#c98869"/><rect x="10" y="18" width="2" height="2" fill="#b77353"/><rect x="12" y="18" width="2" height="2" fill="#823c30"/><rect x="14" y="18" width="2" height="2" fill="#c17760"/><rect x="16" y="18" width="2" height="2" fill="#985040"/><rect x="18" y="18" width="2" height="2" fill="#a35e42"/><rect x="20" y="18" width="2" height="2" fill="#da9075"/><rect x="22" y="18" width="2" height="2" fill="#be775f"/><rect x="24" y="18" width="2" height="2" fill="#cc8469"/><rect x="26" y="18" width="2" height="2" fill="#8a4434"/><rect x="28" y="18" width="2" height="2" fill="#ca8769"/><rect x="30" y="18" width="2" height="2" fill="#dcb499"/><rect x="32" y="18" width="2" height="2" fill="#c1947b"/><rect x="34" y="18" width="2" height="2" fill="#b78d70"/><rect x="36" y="18" width="2" height="2" fill="#be967e"/><rect x="38" y="18" width="2" height="2" fill="#c29a7d"/><rect x="40" y="18" width="2" height="2" fill="#d6af93"/><rect x="42" y="18" width="2" height="2" fill="#cca488"/><rect x="44" y="18" width="2" height="2" fill="#c59a82"/><rect x="46" y="18" width="2" height="2" fill="#b28a71"/><rect x="48" y="18" width="2" height="2" fill="#cfc1b8"/><rect x="50" y="18" width="2" height="2" fill="#ddd0c9"/><rect x="52" y="18" width="2" height="2" fill="#c2ab9b"/><rect x="54" y="18" width="2" height="2" fill="#ceb69d"/><rect x="56" y="18" width="2" height="2" fill="#b19a8b"/><rect x="58" y="18" width="2" height="2" fill="#d7bcab"/><rect x="60" y="18" width="2" height="2" fill="#cdaf9d"/><rect x="62" y="18" width="2" height="2" fill="#63564f"/><rect x="64" y="18" width="2" height="2" fill="#66534c"/><rect x="66" y="18" width="2" height="2" fill="#726058"/><rect x="68" y="18" width="2" height="2" fill="#77685b"/><rect x="70" y="18" width="2" height="2" fill="#7e7267"/><rect x="72" y="18" width="2" height="2" fill="#8e7c74"/><rect x="74" y="18" width="2" height="2" fill="#8f867d"/><rect x="76" y="18" width="2" height="2" fill="#453c35"/><rect x="78" y="18" width="2" height="2" fill="#ce9d7d"/><rect x="80" y="18" width="2" height="2" fill="#e4b38b"/><rect x="82" y="18" width="2" height="2" fill="#e5b392"/><rect x="84" y="18" width="2" height="2" fill="#e1b790"/><rect x="86" y="18" width="2" height="2" fill="#c79a75"/><rect x="88" y="18" width="2" height="2" fill="#dcaf8c"/><rect x="90" y="18" width="2" height="2" fill="#e6b691"/><rect x="92" y="18" width="2" height="2" fill="#b08363"/><rect x="94" y="18" width="2" height="2" fill="#5c554e"/><rect x="96" y="18" width="2" height="2" fill="#ad9f93"/><rect x="98" y="18" width="2" height="2" fill="#aa9f95"/><rect x="0" y="20" width="2" height="2" fill="#544745"/><rect x="2" y="20" width="2" height="2" fill="#813a2d"/><rect x="4" y="20" width="2" height="2" fill="#c97d66"/><rect x="6" y="20" width="2" height="2" fill="#ce846c"/><rect x="8" y="20" width="2" height="2" fill="#a1573d"/><rect x="10" y="20" width="2" height="2" fill="#d68876"/><rect x="12" y="20" width="2" height="2" fill="#874034"/><rect x="14" y="20" width="2" height="2" fill="#c88269"/><rect x="16" y="20" width="2" height="2" fill="#803a2c"/><rect x="18" y="20" width="2" height="2" fill="#d18d6f"/><rect x="20" y="20" width="2" height="2" fill="#bf7255"/><rect x="22" y="20" width="2" height="2" fill="#b57152"/><rect x="24" y="20" width="2" height="2" fill="#c27e5f"/><rect x="26" y="20" width="2" height="2" fill="#833e31"/><rect x="28" y="20" width="2" height="2" fill="#b1644d"/><rect x="30" y="20" width="2" height="2" fill="#d8b398"/><rect x="32" y="20" width="2" height="2" fill="#e3b99a"/><rect x="34" y="20" width="2" height="2" fill="#bd9176"/><rect x="36" y="20" width="2" height="2" fill="#d3ab93"/><rect x="38" y="20" width="2" height="2" fill="#e7bea5"/><rect x="40" y="20" width="2" height="2" fill="#cda594"/><rect x="42" y="20" width="2" height="2" fill="#b58674"/><rect x="44" y="20" width="2" height="2" fill="#b58773"/><rect x="46" y="20" width="2" height="2" fill="#daaf9a"/><rect x="48" y="20" width="2" height="2" fill="#ccc2b7"/><rect x="50" y="20" width="2" height="2" fill="#c7b8b1"/><rect x="52" y="20" width="2" height="2" fill="#b09888"/><rect x="54" y="20" width="2" height="2" fill="#b09c89"/><rect x="56" y="20" width="2" height="2" fill="#d6baa7"/><rect x="58" y="20" width="2" height="2" fill="#cdb9a7"/><rect x="60" y="20" width="2" height="2" fill="#e0c8b2"/><rect x="62" y="20" width="2" height="2" fill="#655353"/><rect x="64" y="20" width="2" height="2" fill="#6e6058"/><rect x="66" y="20" width="2" height="2" fill="#7f6a67"/><rect x="68" y="20" width="2" height="2" fill="#64544e"/><rect x="70" y="20" width="2" height="2" fill="#6e5d57"/><rect x="72" y="20" width="2" height="2" fill="#635a52"/><rect x="74" y="20" width="2" height="2" fill="#6f6152"/><rect x="76" y="20" width="2" height="2" fill="#4a403a"/><rect x="78" y="20" width="2" height="2" fill="#d3a882"/><rect x="80" y="20" width="2" height="2" fill="#c7a37b"/><rect x="82" y="20" width="2" height="2" fill="#e2b58a"/><rect x="84" y="20" width="2" height="2" fill="#d09c77"/><rect x="86" y="20" width="2" height="2" fill="#e6b390"/><rect x="88" y="20" width="2" height="2" fill="#c9a076"/><rect x="90" y="20" width="2" height="2" fill="#e1b58b"/><rect x="92" y="20" width="2" height="2" fill="#d0a07d"/><rect x="94" y="20" width="2" height="2" fill="#534d47"/><rect x="96" y="20" width="2" height="2" fill="#af9f95"/><rect x="98" y="20" width="2" height="2" fill="#b3a599"/><rect x="0" y="22" width="2" height="2" fill="#4f423e"/><rect x="2" y="22" width="2" height="2" fill="#934d40"/><rect x="4" y="22" width="2" height="2" fill="#c98467"/><rect x="6" y="22" width="2" height="2" fill="#cb7e6a"/><rect x="8" y="22" width="2" height="2" fill="#af6652"/><rect x="10" y="22" width="2" height="2" fill="#ac5f46"/><rect x="12" y="22" width="2" height="2" fill="#985343"/><rect x="14" y="22" width="2" height="2" fill="#bf7b63"/><rect x="16" y="22" width="2" height="2" fill="#884433"/><rect x="18" y="22" width="2" height="2" fill="#c88063"/><rect x="20" y="22" width="2" height="2" fill="#d58f75"/><rect x="22" y="22" width="2" height="2" fill="#a45c41"/><rect x="24" y="22" width="2" height="2" fill="#ac644a"/><rect x="26" y="22" width="2" height="2" fill="#8b4337"/><rect x="28" y="22" width="2" height="2" fill="#c3765d"/><rect x="30" y="22" width="2" height="2" fill="#c0987b"/><rect x="32" y="22" width="2" height="2" fill="#b28f78"/><rect x="34" y="22" width="2" height="2" fill="#dab399"/><rect x="36" y="22" width="2" height="2" fill="#d8ad99"/><rect x="38" y="22" width="2" height="2" fill="#c2a081"/><rect x="40" y="22" width="2" height="2" fill="#e3c2a1"/><rect x="42" y="22" width="2" height="2" fill="#d3a992"/><rect x="44" y="22" width="2" height="2" fill="#cea790"/><rect x="46" y="22" width="2" height="2" fill="#d0aa94"/><rect x="48" y="22" width="2" height="2" fill="#ccbeb8"/><rect x="50" y="22" width="2" height="2" fill="#dacdc6"/><rect x="52" y="22" width="2" height="2" fill="#bba792"/><rect x="54" y="22" width="2" height="2" fill="#bda18e"/><rect x="56" y="22" width="2" height="2" fill="#ccb39a"/><rect x="58" y="22" width="2" height="2" fill="#d3b9a7"/><rect x="60" y="22" width="2" height="2" fill="#b19989"/><rect x="62" y="22" width="2" height="2" fill="#94877d"/><rect x="64" y="22" width="2" height="2" fill="#6e594f"/><rect x="66" y="22" width="2" height="2" fill="#807269"/><rect x="68" y="22" width="2" height="2" fill="#8b7c77"/><rect x="70" y="22" width="2" height="2" fill="#7d6c69"/><rect x="72" y="22" width="2" height="2" fill="#7f706c"/><rect x="74" y="22" width="2" height="2" fill="#9c8b84"/><rect x="76" y="22" width="2" height="2" fill="#433732"/><rect x="78" y="22" width="2" height="2" fill="#c59370"/><rect x="80" y="22" width="2" height="2" fill="#cb9b7b"/><rect x="82" y="22" width="2" height="2" fill="#cda07e"/><rect x="84" y="22" width="2" height="2" fill="#bb8965"/><rect x="86" y="22" width="2" height="2" fill="#d6ad84"/><rect x="88" y="22" width="2" height="2" fill="#c59470"/><rect x="90" y="22" width="2" height="2" fill="#b98b6e"/><rect x="92" y="22" width="2" height="2" fill="#dba889"/><rect x="94" y="22" width="2" height="2" fill="#58514c"/><rect x="96" y="22" width="2" height="2" fill="#a6998f"/><rect x="98" y="22" width="2" height="2" fill="#b7aa9f"/><rect x="0" y="24" width="2" height="2" fill="#544743"/><rect x="2" y="24" width="2" height="2" fill="#8f4939"/><rect x="4" y="24" width="2" height="2" fill="#d18971"/><rect x="6" y="24" width="2" height="2" fill="#cf876f"/><rect x="8" y="24" width="2" height="2" fill="#b66a52"/><rect x="10" y="24" width="2" height="2" fill="#b16d4c"/><rect x="12" y="24" width="2" height="2" fill="#84422f"/><rect x="14" y="24" width="2" height="2" fill="#d3856e"/><rect x="16" y="24" width="2" height="2" fill="#934e3d"/><rect x="18" y="24" width="2" height="2" fill="#c47a65"/><rect x="20" y="24" width="2" height="2" fill="#aa644b"/><rect x="22" y="24" width="2" height="2" fill="#d68c77"/><rect x="24" y="24" width="2" height="2" fill="#b0674c"/><rect x="26" y="24" width="2" height="2" fill="#803c2e"/><rect x="28" y="24" width="2" height="2" fill="#c48263"/><rect x="30" y="24" width="2" height="2" fill="#d3b092"/><rect x="32" y="24" width="2" height="2" fill="#c29c80"/><rect x="34" y="24" width="2" height="2" fill="#cda48a"/><rect x="36" y="24" width="2" height="2" fill="#c99c86"/><rect x="38" y="24" width="2" height="2" fill="#d6b199"/><rect x="40" y="24" width="2" height="2" fill="#d3ae94"/><rect x="42" y="24" width="2" height="2" fill="#c7997f"/><rect x="44" y="24" width="2" height="2" fill="#b59075"/><rect x="46" y="24" width="2" height="2" fill="#b28b71"/><rect x="48" y="24" width="2" height="2" fill="#d8c6be"/><rect x="50" y="24" width="2" height="2" fill="#d4c9bf"/><rect x="52" y="24" width="2" height="2" fill="#d4c0a7"/><rect x="54" y="24" width="2" height="2" fill="#b49c8a"/><rect x="56" y="24" width="2" height="2" fill="#c2ae99"/><rect x="58" y="24" width="2" height="2" fill="#b59a86"/><rect x="60" y="24" width="2" height="2" fill="#bca591"/><rect x="62" y="24" width="2" height="2" fill="#998a7c"/><rect x="64" y="24" width="2" height="2" fill="#877a6d"/><rect x="66" y="24" width="2" height="2" fill="#64594b"/><rect x="68" y="24" width="2" height="2" fill="#8f8174"/><rect x="70" y="24" width="2" height="2" fill="#7c6e68"/><rect x="72" y="24" width="2" height="2" fill="#695c51"/><rect x="74" y="24" width="2" height="2" fill="#6b6056"/><rect x="76" y="24" width="2" height="2" fill="#473f38"/><rect x="78" y="24" width="2" height="2" fill="#bc8f68"/><rect x="80" y="24" width="2" height="2" fill="#e5b897"/><rect x="82" y="24" width="2" height="2" fill="#d8a989"/><rect x="84" y="24" width="2" height="2" fill="#d7b088"/><rect x="86" y="24" width="2" height="2" fill="#d6a886"/><rect x="88" y="24" width="2" height="2" fill="#b88b64"/><rect x="90" y="24" width="2" height="2" fill="#b89263"/><rect x="92" y="24" width="2" height="2" fill="#bb9671"/><rect x="94" y="24" width="2" height="2" fill="#58524b"/><rect x="96" y="24" width="2" height="2" fill="#b3a499"/><rect x="98" y="24" width="2" height="2" fill="#bdada6"/><rect x="0" y="26" width="2" height="2" fill="#534643"/><rect x="2" y="26" width="2" height="2" fill="#894232"/><rect x="4" y="26" width="2" height="2" fill="#d3846c"/><rect x="6" y="26" width="2" height="2" fill="#a86447"/><rect x="8" y="26" width="2" height="2" fill="#bc785e"/><rect x="10" y="26" width="2" height="2" fill="#bb755c"/><rect x="12" y="26" width="2" height="2" fill="#904c3e"/><rect x="14" y="26" width="2" height="2" fill="#dc8f74"/><rect x="16" y="26" width="2" height="2" fill="#823b2e"/><rect x="18" y="26" width="2" height="2" fill="#af6855"/><rect x="20" y="26" width="2" height="2" fill="#b96e59"/><rect x="22" y="26" width="2" height="2" fill="#a75943"/><rect x="24" y="26" width="2" height="2" fill="#d28a6c"/><rect x="26" y="26" width="2" height="2" fill="#934d3c"/><rect x="28" y="26" width="2" height="2" fill="#b66552"/><rect x="30" y="26" width="2" height="2" fill="#be967c"/><rect x="32" y="26" width="2" height="2" fill="#c7a181"/><rect x="34" y="26" width="2" height="2" fill="#d0ab8e"/><rect x="36" y="26" width="2" height="2" fill="#cda28d"/><rect x="38" y="26" width="2" height="2" fill="#deb49c"/><rect x="40" y="26" width="2" height="2" fill="#bd927c"/><rect x="42" y="26" width="2" height="2" fill="#d0a48b"/><rect x="44" y="26" width="2" height="2" fill="#dab299"/><rect x="46" y="26" width="2" height="2" fill="#d4ab8f"/><rect x="48" y="26" width="2" height="2" fill="#d6cdc5"/><rect x="50" y="26" width="2" height="2" fill="#c3b5ad"/><rect x="52" y="26" width="2" height="2" fill="#c3a99c"/><rect x="54" y="26" width="2" height="2" fill="#c0a992"/><rect x="56" y="26" width="2" height="2" fill="#beab94"/><rect x="58" y="26" width="2" height="2" fill="#dbc3b1"/><rect x="60" y="26" width="2" height="2" fill="#ceb6a6"/><rect x="62" y="26" width="2" height="2" fill="#776658"/><rect x="64" y="26" width="2" height="2" fill="#897673"/><rect x="66" y="26" width="2" height="2" fill="#87766e"/><rect x="68" y="26" width="2" height="2" fill="#93847e"/><rect x="70" y="26" width="2" height="2" fill="#957f79"/><rect x="72" y="26" width="2" height="2" fill="#9a8282"/><rect x="74" y="26" width="2" height="2" fill="#72685f"/><rect x="76" y="26" width="2" height="2" fill="#4a3f39"/><rect x="78" y="26" width="2" height="2" fill="#cfa079"/><rect x="80" y="26" width="2" height="2" fill="#d29f7b"/><rect x="82" y="26" width="2" height="2" fill="#dead89"/><rect x="84" y="26" width="2" height="2" fill="#d9a47e"/><rect x="86" y="26" width="2" height="2" fill="#d1a683"/><rect x="88" y="26" width="2" height="2" fill="#c1946c"/><rect x="90" y="26" width="2" height="2" fill="#d8a382"/><rect x="92" y="26" width="2" height="2" fill="#d7aa7c"/><rect x="94" y="26" width="2" height="2" fill="#514942"/><rect x="96" y="26" width="2" height="2" fill="#b2a69c"/><rect x="98" y="26" width="2" height="2" fill="#b2a49b"/><rect x="0" y="28" width="2" height="2" fill="#b69067"/><rect x="2" y="28" width="2" height="2" fill="#c2996e"/><rect x="4" y="28" width="2" height="2" fill="#c09469"/><rect x="6" y="28" width="2" height="2" fill="#af8557"/><rect x="8" y="28" width="2" height="2" fill="#d5a879"/><rect x="10" y="28" width="2" height="2" fill="#dfb181"/><rect x="12" y="28" width="2" height="2" fill="#b59a62"/><rect x="14" y="28" width="2" height="2" fill="#a88151"/><rect x="16" y="28" width="2" height="2" fill="#bf9b67"/><rect x="18" y="28" width="2" height="2" fill="#c7a572"/><rect x="20" y="28" width="2" height="2" fill="#a08553"/><rect x="22" y="28" width="2" height="2" fill="#e0c18f"/><rect x="24" y="28" width="2" height="2" fill="#dabb83"/><rect x="26" y="28" width="2" height="2" fill="#b79e6c"/><rect x="28" y="28" width="2" height="2" fill="#d4ae82"/><rect x="30" y="28" width="2" height="2" fill="#caa279"/><rect x="32" y="28" width="2" height="2" fill="#e1b990"/><rect x="34" y="28" width="2" height="2" fill="#e2c392"/><rect x="36" y="28" width="2" height="2" fill="#ddbb80"/><rect x="38" y="28" width="2" height="2" fill="#a78151"/><rect x="40" y="28" width="2" height="2" fill="#aa8653"/><rect x="42" y="28" width="2" height="2" fill="#ad885a"/><rect x="44" y="28" width="2" height="2" fill="#745e4e"/><rect x="46" y="28" width="2" height="2" fill="#543c2b"/><rect x="48" y="28" width="2" height="2" fill="#75604e"/><rect x="50" y="28" width="2" height="2" fill="#614d40"/><rect x="52" y="28" width="2" height="2" fill="#594534"/><rect x="54" y="28" width="2" height="2" fill="#695845"/><rect x="56" y="28" width="2" height="2" fill="#65503d"/><rect x="58" y="28" width="2" height="2" fill="#563f2e"/><rect x="60" y="28" width="2" height="2" fill="#d6c29c"/><rect x="62" y="28" width="2" height="2" fill="#dec8a0"/><rect x="64" y="28" width="2" height="2" fill="#cfb995"/><rect x="66" y="28" width="2" height="2" fill="#c5ab88"/><rect x="68" y="28" width="2" height="2" fill="#bfa883"/><rect x="70" y="28" width="2" height="2" fill="#c0b086"/><rect x="72" y="28" width="2" height="2" fill="#c0aa84"/><rect x="74" y="28" width="2" height="2" fill="#ccb48d"/><rect x="76" y="28" width="2" height="2" fill="#b09671"/><rect x="78" y="28" width="2" height="2" fill="#b6a181"/><rect x="80" y="28" width="2" height="2" fill="#bc9f7a"/><rect x="82" y="28" width="2" height="2" fill="#d7c4a0"/><rect x="84" y="28" width="2" height="2" fill="#6f594a"/><rect x="86" y="28" width="2" height="2" fill="#624d3b"/><rect x="88" y="28" width="2" height="2" fill="#6d5249"/><rect x="90" y="28" width="2" height="2" fill="#594437"/><rect x="92" y="28" width="2" height="2" fill="#503d2f"/><rect x="94" y="28" width="2" height="2" fill="#464542"/><rect x="96" y="28" width="2" height="2" fill="#403f3d"/><rect x="98" y="28" width="2" height="2" fill="#403f3d"/><rect x="0" y="30" width="2" height="2" fill="#e0b289"/><rect x="2" y="30" width="2" height="2" fill="#ba9e67"/><rect x="4" y="30" width="2" height="2" fill="#a5834c"/><rect x="6" y="30" width="2" height="2" fill="#dbbb82"/><rect x="8" y="30" width="2" height="2" fill="#9c7d4d"/><rect x="10" y="30" width="2" height="2" fill="#d3b482"/><rect x="12" y="30" width="2" height="2" fill="#c19f6b"/><rect x="14" y="30" width="2" height="2" fill="#aa875f"/><rect x="16" y="30" width="2" height="2" fill="#d0b07d"/><rect x="18" y="30" width="2" height="2" fill="#d2a97d"/><rect x="20" y="30" width="2" height="2" fill="#ad8860"/><rect x="22" y="30" width="2" height="2" fill="#dcb37f"/><rect x="24" y="30" width="2" height="2" fill="#c0a26c"/><rect x="26" y="30" width="2" height="2" fill="#c4a170"/><rect x="28" y="30" width="2" height="2" fill="#c0a06f"/><rect x="30" y="30" width="2" height="2" fill="#cca37b"/><rect x="32" y="30" width="2" height="2" fill="#b79065"/><rect x="34" y="30" width="2" height="2" fill="#cba67a"/><rect x="36" y="30" width="2" height="2" fill="#c5a870"/><rect x="38" y="30" width="2" height="2" fill="#e0ba88"/><rect x="40" y="30" width="2" height="2" fill="#dbbd8a"/><rect x="42" y="30" width="2" height="2" fill="#755c51"/><rect x="44" y="30" width="2" height="2" fill="#604a3b"/><rect x="46" y="30" width="2" height="2" fill="#5e4a36"/><rect x="48" y="30" width="2" height="2" fill="#523e2e"/><rect x="50" y="30" width="2" height="2" fill="#6a5343"/><rect x="52" y="30" width="2" height="2" fill="#765c52"/><rect x="54" y="30" width="2" height="2" fill="#594837"/><rect x="56" y="30" width="2" height="2" fill="#6f5b4c"/><rect x="58" y="30" width="2" height="2" fill="#503d2a"/><rect x="60" y="30" width="2" height="2" fill="#caad88"/><rect x="62" y="30" width="2" height="2" fill="#b99f7a"/><rect x="64" y="30" width="2" height="2" fill="#cebb94"/><rect x="66" y="30" width="2" height="2" fill="#ae9f73"/><rect x="68" y="30" width="2" height="2" fill="#c8b18d"/><rect x="70" y="30" width="2" height="2" fill="#ccb78f"/><rect x="72" y="30" width="2" height="2" fill="#bda77f"/><rect x="74" y="30" width="2" height="2" fill="#cab68e"/><rect x="76" y="30" width="2" height="2" fill="#dac7a2"/><rect x="78" y="30" width="2" height="2" fill="#d6c39f"/><rect x="80" y="30" width="2" height="2" fill="#d4c098"/><rect x="82" y="30" width="2" height="2" fill="#d8c79b"/><rect x="84" y="30" width="2" height="2" fill="#5d483a"/><rect x="86" y="30" width="2" height="2" fill="#554233"/><rect x="88" y="30" width="2" height="2" fill="#594136"/><rect x="90" y="30" width="2" height="2" fill="#604735"/><rect x="92" y="30" width="2" height="2" fill="#6b5a45"/><rect x="94" y="30" width="2" height="2" fill="#494946"/><rect x="96" y="30" width="2" height="2" fill="#474342"/><rect x="98" y="30" width="2" height="2" fill="#474644"/><rect x="0" y="32" width="2" height="2" fill="#dfba89"/><rect x="2" y="32" width="2" height="2" fill="#d4b584"/><rect x="4" y="32" width="2" height="2" fill="#e7bc91"/><rect x="6" y="32" width="2" height="2" fill="#e0c089"/><rect x="8" y="32" width="2" height="2" fill="#c49c6b"/><rect x="10" y="32" width="2" height="2" fill="#bd976a"/><rect x="12" y="32" width="2" height="2" fill="#deb98c"/><rect x="14" y="32" width="2" height="2" fill="#dbb892"/><rect x="16" y="32" width="2" height="2" fill="#ba9366"/><rect x="18" y="32" width="2" height="2" fill="#c9a974"/><rect x="20" y="32" width="2" height="2" fill="#c39a69"/><rect x="22" y="32" width="2" height="2" fill="#cca975"/><rect x="24" y="32" width="2" height="2" fill="#e8bc8e"/><rect x="26" y="32" width="2" height="2" fill="#d4b187"/><rect x="28" y="32" width="2" height="2" fill="#b28a54"/><rect x="30" y="32" width="2" height="2" fill="#e1b590"/><rect x="32" y="32" width="2" height="2" fill="#c3a176"/><rect x="34" y="32" width="2" height="2" fill="#b99b67"/><rect x="36" y="32" width="2" height="2" fill="#d6b786"/><rect x="38" y="32" width="2" height="2" fill="#c6ad7d"/><rect x="40" y="32" width="2" height="2" fill="#604a3a"/><rect x="42" y="32" width="2" height="2" fill="#6b5846"/><rect x="44" y="32" width="2" height="2" fill="#584231"/><rect x="46" y="32" width="2" height="2" fill="#5f453c"/><rect x="48" y="32" width="2" height="2" fill="#58422f"/><rect x="50" y="32" width="2" height="2" fill="#746451"/><rect x="52" y="32" width="2" height="2" fill="#715e52"/><rect x="54" y="32" width="2" height="2" fill="#5d4836"/><rect x="56" y="32" width="2" height="2" fill="#6c5749"/><rect x="58" y="32" width="2" height="2" fill="#5f4b3a"/><rect x="60" y="32" width="2" height="2" fill="#cbb08c"/><rect x="62" y="32" width="2" height="2" fill="#bfac85"/><rect x="64" y="32" width="2" height="2" fill="#dfc6a0"/><rect x="66" y="32" width="2" height="2" fill="#b99c7a"/><rect x="68" y="32" width="2" height="2" fill="#b6a47e"/><rect x="70" y="32" width="2" height="2" fill="#c3a982"/><rect x="72" y="32" width="2" height="2" fill="#c1ac8a"/><rect x="74" y="32" width="2" height="2" fill="#cdbe92"/><rect x="76" y="32" width="2" height="2" fill="#cdbd91"/><rect x="78" y="32" width="2" height="2" fill="#bba983"/><rect x="80" y="32" width="2" height="2" fill="#c0a987"/><rect x="82" y="32" width="2" height="2" fill="#bda886"/><rect x="84" y="32" width="2" height="2" fill="#554435"/><rect x="86" y="32" width="2" height="2" fill="#5e4839"/><rect x="88" y="32" width="2" height="2" fill="#74644f"/><rect x="90" y="32" width="2" height="2" fill="#725a4d"/><rect x="92" y="32" width="2" height="2" fill="#76604f"/><rect x="94" y="32" width="2" height="2" fill="#3f3d3c"/><rect x="96" y="32" width="2" height="2" fill="#464442"/><rect x="98" y="32" width="2" height="2" fill="#4c4b48"/><rect x="0" y="34" width="2" height="2" fill="#b5966a"/><rect x="2" y="34" width="2" height="2" fill="#a47c4d"/><rect x="4" y="34" width="2" height="2" fill="#deb585"/><rect x="6" y="34" width="2" height="2" fill="#b19560"/><rect x="8" y="34" width="2" height="2" fill="#be9f75"/><rect x="10" y="34" width="2" height="2" fill="#c4a172"/><rect x="12" y="34" width="2" height="2" fill="#dbb982"/><rect x="14" y="34" width="2" height="2" fill="#a57a4b"/><rect x="16" y="34" width="2" height="2" fill="#b78e60"/><rect x="18" y="34" width="2" height="2" fill="#cba87f"/><rect x="20" y="34" width="2" height="2" fill="#c5a47b"/><rect x="22" y="34" width="2" height="2" fill="#ae905b"/><rect x="24" y="34" width="2" height="2" fill="#cca877"/><rect x="26" y="34" width="2" height="2" fill="#ad8559"/><rect x="28" y="34" width="2" height="2" fill="#ddb387"/><rect x="30" y="34" width="2" height="2" fill="#a17e49"/><rect x="32" y="34" width="2" height="2" fill="#d0b485"/><rect x="34" y="34" width="2" height="2" fill="#dfb48c"/><rect x="36" y="34" width="2" height="2" fill="#9f7a4a"/><rect x="38" y="34" width="2" height="2" fill="#b18960"/><rect x="40" y="34" width="2" height="2" fill="#d0ccc5"/><rect x="42" y="34" width="2" height="2" fill="#b0aaa2"/><rect x="44" y="34" width="2" height="2" fill="#b8b4ab"/><rect x="46" y="34" width="2" height="2" fill="#b1aca3"/><rect x="48" y="34" width="2" height="2" fill="#b5b1a9"/><rect x="50" y="34" width="2" height="2" fill="#b1aea7"/><rect x="52" y="34" width="2" height="2" fill="#b2aea5"/><rect x="54" y="34" width="2" height="2" fill="#aba8a0"/><rect x="56" y="34" width="2" height="2" fill="#b1aca6"/><rect x="58" y="34" width="2" height="2" fill="#adaaa3"/><rect x="60" y="34" width="2" height="2" fill="#b6b3ab"/><rect x="62" y="34" width="2" height="2" fill="#acaaa0"/><rect x="64" y="34" width="2" height="2" fill="#a9a69d"/><rect x="66" y="34" width="2" height="2" fill="#aba9a1"/><rect x="68" y="34" width="2" height="2" fill="#b3afa9"/><rect x="70" y="34" width="2" height="2" fill="#aaa7a0"/><rect x="72" y="34" width="2" height="2" fill="#cbc8be"/><rect x="74" y="34" width="2" height="2" fill="#b6b2ab"/><rect x="76" y="34" width="2" height="2" fill="#b1aea6"/><rect x="78" y="34" width="2" height="2" fill="#b6b1a8"/><rect x="80" y="34" width="2" height="2" fill="#b3ada4"/><rect x="82" y="34" width="2" height="2" fill="#acaaa2"/><rect x="84" y="34" width="2" height="2" fill="#aaa69d"/><rect x="86" y="34" width="2" height="2" fill="#b4afa7"/><rect x="88" y="34" width="2" height="2" fill="#b3afa5"/><rect x="90" y="34" width="2" height="2" fill="#aea8a2"/><rect x="92" y="34" width="2" height="2" fill="#b6b4aa"/><rect x="94" y="34" width="2" height="2" fill="#4b4847"/><rect x="96" y="34" width="2" height="2" fill="#454141"/><rect x="98" y="34" width="2" height="2" fill="#484746"/><rect x="0" y="36" width="2" height="2" fill="#d2ad7b"/><rect x="2" y="36" width="2" height="2" fill="#a77c54"/><rect x="4" y="36" width="2" height="2" fill="#ac915f"/><rect x="6" y="36" width="2" height="2" fill="#c1a070"/><rect x="8" y="36" width="2" height="2" fill="#bd9a6a"/><rect x="10" y="36" width="2" height="2" fill="#af8a64"/><rect x="12" y="36" width="2" height="2" fill="#e0c58c"/><rect x="14" y="36" width="2" height="2" fill="#d3b079"/><rect x="16" y="36" width="2" height="2" fill="#b99565"/><rect x="18" y="36" width="2" height="2" fill="#c6a776"/><rect x="20" y="36" width="2" height="2" fill="#b08f67"/><rect x="22" y="36" width="2" height="2" fill="#b18f5d"/><rect x="24" y="36" width="2" height="2" fill="#a8855a"/><rect x="26" y="36" width="2" height="2" fill="#b98d60"/><rect x="28" y="36" width="2" height="2" fill="#dec190"/><rect x="30" y="36" width="2" height="2" fill="#c7a36c"/><rect x="32" y="36" width="2" height="2" fill="#dbb786"/><rect x="34" y="36" width="2" height="2" fill="#c79b71"/><rect x="36" y="36" width="2" height="2" fill="#b5925e"/><rect x="38" y="36" width="2" height="2" fill="#aba89e"/><rect x="40" y="36" width="2" height="2" fill="#c9c4bc"/><rect x="42" y="36" width="2" height="2" fill="#b7b1aa"/><rect x="44" y="36" width="2" height="2" fill="#b8b3ab"/><rect x="46" y="36" width="2" height="2" fill="#afaba3"/><rect x="48" y="36" width="2" height="2" fill="#aba8a1"/><rect x="50" y="36" width="2" height="2" fill="#a7a49b"/><rect x="52" y="36" width="2" height="2" fill="#b1ada6"/><rect x="54" y="36" width="2" height="2" fill="#a6a39a"/><rect x="56" y="36" width="2" height="2" fill="#b4b0a9"/><rect x="58" y="36" width="2" height="2" fill="#aaa89e"/><rect x="60" y="36" width="2" height="2" fill="#aca8a1"/><rect x="62" y="36" width="2" height="2" fill="#b6b3a9"/><rect x="64" y="36" width="2" height="2" fill="#b1aca4"/><rect x="66" y="36" width="2" height="2" fill="#aca9a1"/><rect x="68" y="36" width="2" height="2" fill="#b7b2ab"/><rect x="70" y="36" width="2" height="2" fill="#b0aca3"/><rect x="72" y="36" width="2" height="2" fill="#d3d0c7"/><rect x="74" y="36" width="2" height="2" fill="#b2afa6"/><rect x="76" y="36" width="2" height="2" fill="#b0aea7"/><rect x="78" y="36" width="2" height="2" fill="#b7b2aa"/><rect x="80" y="36" width="2" height="2" fill="#aea9a1"/><rect x="82" y="36" width="2" height="2" fill="#b5b0a7"/><rect x="84" y="36" width="2" height="2" fill="#a8a59c"/><rect x="86" y="36" width="2" height="2" fill="#aaa89e"/><rect x="88" y="36" width="2" height="2" fill="#b7b3ad"/><rect x="90" y="36" width="2" height="2" fill="#b1b0a7"/><rect x="92" y="36" width="2" height="2" fill="#aba6a0"/><rect x="94" y="36" width="2" height="2" fill="#42423e"/><rect x="96" y="36" width="2" height="2" fill="#4c4949"/><rect x="98" y="36" width="2" height="2" fill="#403e3e"/><rect x="0" y="38" width="2" height="2" fill="#e5c08e"/><rect x="2" y="38" width="2" height="2" fill="#d6b488"/><rect x="4" y="38" width="2" height="2" fill="#caa977"/><rect x="6" y="38" width="2" height="2" fill="#a47d54"/><rect x="8" y="38" width="2" height="2" fill="#a5814e"/><rect x="10" y="38" width="2" height="2" fill="#9f7c4a"/><rect x="12" y="38" width="2" height="2" fill="#ccab77"/><rect x="14" y="38" width="2" height="2" fill="#dbb18a"/><rect x="16" y="38" width="2" height="2" fill="#c6a371"/><rect x="18" y="38" width="2" height="2" fill="#dfbe8c"/><rect x="20" y="38" width="2" height="2" fill="#b8895b"/><rect x="22" y="38" width="2" height="2" fill="#b19465"/><rect x="24" y="38" width="2" height="2" fill="#a6834b"/><rect x="26" y="38" width="2" height="2" fill="#deb28a"/><rect x="28" y="38" width="2" height="2" fill="#deba81"/><rect x="30" y="38" width="2" height="2" fill="#bc9964"/><rect x="32" y="38" width="2" height="2" fill="#cba575"/><rect x="34" y="38" width="2" height="2" fill="#d6b181"/><rect x="36" y="38" width="2" height="2" fill="#b3b0a7"/><rect x="38" y="38" width="2" height="2" fill="#b9b2aa"/><rect x="40" y="38" width="2" height="2" fill="#d1cec4"/><rect x="42" y="38" width="2" height="2" fill="#a9a69e"/><rect x="44" y="38" width="2" height="2" fill="#aaa69f"/><rect x="46" y="38" width="2" height="2" fill="#b3b0a9"/><rect x="48" y="38" width="2" height="2" fill="#ada8a0"/><rect x="50" y="38" width="2" height="2" fill="#b4b1a9"/><rect x="52" y="38" width="2" height="2" fill="#b0ada3"/><rect x="54" y="38" width="2" height="2" fill="#ada8a0"/><rect x="56" y="38" width="2" height="2" fill="#ada9a3"/><rect x="58" y="38" width="2" height="2" fill="#a8a29c"/><rect x="60" y="38" width="2" height="2" fill="#b2afa6"/><rect x="62" y="38" width="2" height="2" fill="#b2afa7"/><rect x="64" y="38" width="2" height="2" fill="#abaa9f"/><rect x="66" y="38" width="2" height="2" fill="#b5b1aa"/><rect x="68" y="38" width="2" height="2" fill="#b4b2a8"/><rect x="70" y="38" width="2" height="2" fill="#aca89e"/><rect x="72" y="38" width="2" height="2" fill="#d0cdc6"/><rect x="74" y="38" width="2" height="2" fill="#aca79f"/><rect x="76" y="38" width="2" height="2" fill="#aba6a0"/><rect x="78" y="38" width="2" height="2" fill="#b8b2ab"/><rect x="80" y="38" width="2" height="2" fill="#aca69f"/><rect x="82" y="38" width="2" height="2" fill="#b0aba3"/><rect x="84" y="38" width="2" height="2" fill="#b1ada6"/><rect x="86" y="38" width="2" height="2" fill="#b1afa6"/><rect x="88" y="38" width="2" height="2" fill="#b3b0a6"/><rect x="90" y="38" width="2" height="2" fill="#a9a79c"/><rect x="92" y="38" width="2" height="2" fill="#b3afa7"/><rect x="94" y="38" width="2" height="2" fill="#3f3e3a"/><rect x="96" y="38" width="2" height="2" fill="#474542"/><rect x="98" y="38" width="2" height="2" fill="#4b4846"/><rect x="0" y="40" width="2" height="2" fill="#e4c193"/><rect x="2" y="40" width="2" height="2" fill="#d9be8e"/><rect x="4" y="40" width="2" height="2" fill="#c3a778"/><rect x="6" y="40" width="2" height="2" fill="#d2a67d"/><rect x="8" y="40" width="2" height="2" fill="#ae8b63"/><rect x="10" y="40" width="2" height="2" fill="#aa804e"/><rect x="12" y="40" width="2" height="2" fill="#c49a69"/><rect x="14" y="40" width="2" height="2" fill="#e0be88"/><rect x="16" y="40" width="2" height="2" fill="#e1c28e"/><rect x="18" y="40" width="2" height="2" fill="#bb926c"/><rect x="20" y="40" width="2" height="2" fill="#ab8b62"/><rect x="22" y="40" width="2" height="2" fill="#b49261"/><rect x="24" y="40" width="2" height="2" fill="#d9af86"/><rect x="26" y="40" width="2" height="2" fill="#ac8b5e"/><rect x="28" y="40" width="2" height="2" fill="#be9a65"/><rect x="30" y="40" width="2" height="2" fill="#e3ba8f"/><rect x="32" y="40" width="2" height="2" fill="#e1be8b"/><rect x="34" y="40" width="2" height="2" fill="#cfa677"/><rect x="36" y="40" width="2" height="2" fill="#b2ada6"/><rect x="38" y="40" width="2" height="2" fill="#ada9a2"/><rect x="40" y="40" width="2" height="2" fill="#cac5bc"/><rect x="42" y="40" width="2" height="2" fill="#a6a49b"/><rect x="44" y="40" width="2" height="2" fill="#aba69d"/><rect x="46" y="40" width="2" height="2" fill="#b5b0aa"/><rect x="48" y="40" width="2" height="2" fill="#b1aca5"/><rect x="50" y="40" width="2" height="2" fill="#b5b2aa"/><rect x="52" y="40" width="2" height="2" fill="#aca89f"/><rect x="54" y="40" width="2" height="2" fill="#b5b1aa"/><rect x="56" y="40" width="2" height="2" fill="#afaca3"/><rect x="58" y="40" width="2" height="2" fill="#b3afa9"/><rect x="60" y="40" width="2" height="2" fill="#a7a39c"/><rect x="62" y="40" width="2" height="2" fill="#a8a59d"/><rect x="64" y="40" width="2" height="2" fill="#b5b1aa"/><rect x="66" y="40" width="2" height="2" fill="#b8b3aa"/><rect x="68" y="40" width="2" height="2" fill="#b6b2ac"/><rect x="70" y="40" width="2" height="2" fill="#b4b1a9"/><rect x="72" y="40" width="2" height="2" fill="#cfccc2"/><rect x="74" y="40" width="2" height="2" fill="#aba89f"/><rect x="76" y="40" width="2" height="2" fill="#b4afa7"/><rect x="78" y="40" width="2" height="2" fill="#b4b1a8"/><rect x="80" y="40" width="2" height="2" fill="#aba8a1"/><rect x="82" y="40" width="2" height="2" fill="#a9a79d"/><rect x="84" y="40" width="2" height="2" fill="#afaea6"/><rect x="86" y="40" width="2" height="2" fill="#a9a7a0"/><rect x="88" y="40" width="2" height="2" fill="#a6a39d"/><rect x="90" y="40" width="2" height="2" fill="#afaba3"/><rect x="92" y="40" width="2" height="2" fill="#b7b3ac"/><rect x="94" y="40" width="2" height="2" fill="#b7b3ac"/><rect x="96" y="40" width="2" height="2" fill="#b1aea7"/><rect x="98" y="40" width="2" height="2" fill="#b1aca5"/><rect x="0" y="42" width="2" height="2" fill="#b99464"/><rect x="2" y="42" width="2" height="2" fill="#ab8c58"/><rect x="4" y="42" width="2" height="2" fill="#d4ad7f"/><rect x="6" y="42" width="2" height="2" fill="#a98755"/><rect x="8" y="42" width="2" height="2" fill="#d3b782"/><rect x="10" y="42" width="2" height="2" fill="#a78457"/><rect x="12" y="42" width="2" height="2" fill="#bc9a63"/><rect x="14" y="42" width="2" height="2" fill="#bea16f"/><rect x="16" y="42" width="2" height="2" fill="#ddb989"/><rect x="18" y="42" width="2" height="2" fill="#a07e4f"/><rect x="20" y="42" width="2" height="2" fill="#b08459"/><rect x="22" y="42" width="2" height="2" fill="#d5b87f"/><rect x="24" y="42" width="2" height="2" fill="#ddbc8a"/><rect x="26" y="42" width="2" height="2" fill="#d2b485"/><rect x="28" y="42" width="2" height="2" fill="#a77f4a"/><rect x="30" y="42" width="2" height="2" fill="#dcb985"/><rect x="32" y="42" width="2" height="2" fill="#a88553"/><rect x="34" y="42" width="2" height="2" fill="#adaa9f"/><rect x="36" y="42" width="2" height="2" fill="#a9a69d"/><rect x="38" y="42" width="2" height="2" fill="#aba79e"/><rect x="40" y="42" width="2" height="2" fill="#cac5be"/><rect x="42" y="42" width="2" height="2" fill="#aeaca4"/><rect x="44" y="42" width="2" height="2" fill="#aba59f"/><rect x="46" y="42" width="2" height="2" fill="#aeaba2"/><rect x="48" y="42" width="2" height="2" fill="#b1ada4"/><rect x="50" y="42" width="2" height="2" fill="#afa9a3"/><rect x="52" y="42" width="2" height="2" fill="#aaa39e"/><rect x="54" y="42" width="2" height="2" fill="#b0aca4"/><rect x="56" y="42" width="2" height="2" fill="#b9b4ab"/><rect x="58" y="42" width="2" height="2" fill="#b3afa9"/><rect x="60" y="42" width="2" height="2" fill="#adaba1"/><rect x="62" y="42" width="2" height="2" fill="#adaaa1"/><rect x="64" y="42" width="2" height="2" fill="#b5b3ab"/><rect x="66" y="42" width="2" height="2" fill="#aca79e"/><rect x="68" y="42" width="2" height="2" fill="#b1aca6"/><rect x="70" y="42" width="2" height="2" fill="#abaaa1"/><rect x="72" y="42" width="2" height="2" fill="#d1cec5"/><rect x="74" y="42" width="2" height="2" fill="#aba59c"/><rect x="76" y="42" width="2" height="2" fill="#b0aba4"/><rect x="78" y="42" width="2" height="2" fill="#aba69e"/><rect x="80" y="42" width="2" height="2" fill="#b3aea8"/><rect x="82" y="42" width="2" height="2" fill="#b8b3ac"/><rect x="84" y="42" width="2" height="2" fill="#aca8a0"/><rect x="86" y="42" width="2" height="2" fill="#afaba4"/><rect x="88" y="42" width="2" height="2" fill="#b5b2a9"/><rect x="90" y="42" width="2" height="2" fill="#a8a49f"/><rect x="92" y="42" width="2" height="2" fill="#afaba1"/><rect x="94" y="42" width="2" height="2" fill="#b1aca5"/><rect x="96" y="42" width="2" height="2" fill="#b1aea6"/><rect x="98" y="42" width="2" height="2" fill="#ada69f"/><rect x="0" y="44" width="2" height="2" fill="#ae8e5d"/><rect x="2" y="44" width="2" height="2" fill="#b69663"/><rect x="4" y="44" width="2" height="2" fill="#caab7d"/><rect x="6" y="44" width="2" height="2" fill="#af8a58"/><rect x="8" y="44" width="2" height="2" fill="#b38c59"/><rect x="10" y="44" width="2" height="2" fill="#a6844d"/><rect x="12" y="44" width="2" height="2" fill="#d2af80"/><rect x="14" y="44" width="2" height="2" fill="#a58858"/><rect x="16" y="44" width="2" height="2" fill="#a78452"/><rect x="18" y="44" width="2" height="2" fill="#c9a579"/><rect x="20" y="44" width="2" height="2" fill="#a98457"/><rect x="22" y="44" width="2" height="2" fill="#d6b47d"/><rect x="24" y="44" width="2" height="2" fill="#b69a60"/><rect x="26" y="44" width="2" height="2" fill="#ac8252"/><rect x="28" y="44" width="2" height="2" fill="#d0a97d"/><rect x="30" y="44" width="2" height="2" fill="#e1bf88"/><rect x="32" y="44" width="2" height="2" fill="#b1afa7"/><rect x="34" y="44" width="2" height="2" fill="#afaaa3"/><rect x="36" y="44" width="2" height="2" fill="#b1aca4"/><rect x="38" y="44" width="2" height="2" fill="#aaa79d"/><rect x="40" y="44" width="2" height="2" fill="#d2cec8"/><rect x="42" y="44" width="2" height="2" fill="#a9a69f"/><rect x="44" y="44" width="2" height="2" fill="#b6b3ac"/><rect x="46" y="44" width="2" height="2" fill="#b5b0a8"/><rect x="48" y="44" width="2" height="2" fill="#b7b3aa"/><rect x="50" y="44" width="2" height="2" fill="#aeaba3"/><rect x="52" y="44" width="2" height="2" fill="#b7b2ab"/><rect x="54" y="44" width="2" height="2" fill="#a9a59e"/><rect x="56" y="44" width="2" height="2" fill="#aeaaa2"/><rect x="58" y="44" width="2" height="2" fill="#a9a39c"/><rect x="60" y="44" width="2" height="2" fill="#b3b0a8"/><rect x="62" y="44" width="2" height="2" fill="#aaa69d"/><rect x="64" y="44" width="2" height="2" fill="#afaca4"/><rect x="66" y="44" width="2" height="2" fill="#ada8a2"/><rect x="68" y="44" width="2" height="2" fill="#aea9a2"/><rect x="70" y="44" width="2" height="2" fill="#b2ada6"/><rect x="72" y="44" width="2" height="2" fill="#d6d3ca"/><rect x="74" y="44" width="2" height="2" fill="#aba8a2"/><rect x="76" y="44" width="2" height="2" fill="#afaca3"/><rect x="78" y="44" width="2" height="2" fill="#aba7a0"/><rect x="80" y="44" width="2" height="2" fill="#b5afa8"/><rect x="82" y="44" width="2" height="2" fill="#b0aea4"/><rect x="84" y="44" width="2" height="2" fill="#b2aea8"/><rect x="86" y="44" width="2" height="2" fill="#b4b0a8"/><rect x="88" y="44" width="2" height="2" fill="#b4afa7"/><rect x="90" y="44" width="2" height="2" fill="#afa9a1"/><rect x="92" y="44" width="2" height="2" fill="#afaca5"/><rect x="94" y="44" width="2" height="2" fill="#b7b4ab"/><rect x="96" y="44" width="2" height="2" fill="#a8a69c"/><rect x="98" y="44" width="2" height="2" fill="#b8b2aa"/><rect x="0" y="46" width="2" height="2" fill="#b58e63"/><rect x="2" y="46" width="2" height="2" fill="#c8a575"/><rect x="4" y="46" width="2" height="2" fill="#bc9665"/><rect x="6" y="46" width="2" height="2" fill="#e2be8c"/><rect x="8" y="46" width="2" height="2" fill="#b79963"/><rect x="10" y="46" width="2" height="2" fill="#bd9966"/><rect x="12" y="46" width="2" height="2" fill="#dfbe85"/><rect x="14" y="46" width="2" height="2" fill="#b88b5d"/><rect x="16" y="46" width="2" height="2" fill="#c79d73"/><rect x="18" y="46" width="2" height="2" fill="#debe92"/><rect x="20" y="46" width="2" height="2" fill="#d8bb8a"/><rect x="22" y="46" width="2" height="2" fill="#c6a973"/><rect x="24" y="46" width="2" height="2" fill="#c2a76f"/><rect x="26" y="46" width="2" height="2" fill="#d8b688"/><rect x="28" y="46" width="2" height="2" fill="#bea26c"/><rect x="30" y="46" width="2" height="2" fill="#b79263"/><rect x="32" y="46" width="2" height="2" fill="#b1afa7"/><rect x="34" y="46" width="2" height="2" fill="#b4b2aa"/><rect x="36" y="46" width="2" height="2" fill="#b0aaa2"/><rect x="38" y="46" width="2" height="2" fill="#afa9a3"/><rect x="40" y="46" width="2" height="2" fill="#ccc9bf"/><rect x="42" y="46" width="2" height="2" fill="#b5b0a7"/><rect x="44" y="46" width="2" height="2" fill="#b9b4ac"/><rect x="46" y="46" width="2" height="2" fill="#a9a69f"/><rect x="48" y="46" width="2" height="2" fill="#b4b0a7"/><rect x="50" y="46" width="2" height="2" fill="#aaa89f"/><rect x="52" y="46" width="2" height="2" fill="#b4aea7"/><rect x="54" y="46" width="2" height="2" fill="#b1aea6"/><rect x="56" y="46" width="2" height="2" fill="#b1aca5"/><rect x="58" y="46" width="2" height="2" fill="#aba89e"/><rect x="60" y="46" width="2" height="2" fill="#a9a59d"/><rect x="62" y="46" width="2" height="2" fill="#b8b4ab"/><rect x="64" y="46" width="2" height="2" fill="#ada8a0"/><rect x="66" y="46" width="2" height="2" fill="#b4afa8"/><rect x="68" y="46" width="2" height="2" fill="#b1ada3"/><rect x="70" y="46" width="2" height="2" fill="#b1aea5"/><rect x="72" y="46" width="2" height="2" fill="#cdcac1"/><rect x="74" y="46" width="2" height="2" fill="#b1aba4"/><rect x="76" y="46" width="2" height="2" fill="#a8a39b"/><rect x="78" y="46" width="2" height="2" fill="#b0ada7"/><rect x="80" y="46" width="2" height="2" fill="#aaa89e"/><rect x="82" y="46" width="2" height="2" fill="#aea8a3"/><rect x="84" y="46" width="2" height="2" fill="#a8a29c"/><rect x="86" y="46" width="2" height="2" fill="#b1aea4"/><rect x="88" y="46" width="2" height="2" fill="#a7a29c"/><rect x="90" y="46" width="2" height="2" fill="#b2afa8"/><rect x="92" y="46" width="2" height="2" fill="#aba79e"/><rect x="94" y="46" width="2" height="2" fill="#b7b2a9"/><rect x="96" y="46" width="2" height="2" fill="#b2ada4"/><rect x="98" y="46" width="2" height="2" fill="#b1aca5"/><rect x="0" y="48" width="2" height="2" fill="#b49666"/><rect x="2" y="48" width="2" height="2" fill="#d4ba8a"/><rect x="4" y="48" width="2" height="2" fill="#e0bc83"/><rect x="6" y="48" width="2" height="2" fill="#c19c63"/><rect x="8" y="48" width="2" height="2" fill="#a77948"/><rect x="10" y="48" width="2" height="2" fill="#ceab7a"/><rect x="12" y="48" width="2" height="2" fill="#d6b27f"/><rect x="14" y="48" width="2" height="2" fill="#e4b88a"/><rect x="16" y="48" width="2" height="2" fill="#e3b98a"/><rect x="18" y="48" width="2" height="2" fill="#b89662"/><rect x="20" y="48" width="2" height="2" fill="#b58f61"/><rect x="22" y="48" width="2" height="2" fill="#a98256"/><rect x="24" y="48" width="2" height="2" fill="#dfb984"/><rect x="26" y="48" width="2" height="2" fill="#ceab83"/><rect x="28" y="48" width="2" height="2" fill="#dfbe8d"/><rect x="30" y="48" width="2" height="2" fill="#aca99f"/><rect x="32" y="48" width="2" height="2" fill="#aaa49d"/><rect x="34" y="48" width="2" height="2" fill="#acaaa1"/><rect x="36" y="48" width="2" height="2" fill="#b0aaa2"/><rect x="38" y="48" width="2" height="2" fill="#a9a59c"/><rect x="40" y="48" width="2" height="2" fill="#cfcdc3"/><rect x="42" y="48" width="2" height="2" fill="#aba8a0"/><rect x="44" y="48" width="2" height="2" fill="#aba8a1"/><rect x="46" y="48" width="2" height="2" fill="#b3afa5"/><rect x="48" y="48" width="2" height="2" fill="#b6b3a9"/><rect x="50" y="48" width="2" height="2" fill="#a7a59d"/><rect x="52" y="48" width="2" height="2" fill="#b5b1aa"/><rect x="54" y="48" width="2" height="2" fill="#b5b0a9"/><rect x="56" y="48" width="2" height="2" fill="#adaaa2"/><rect x="58" y="48" width="2" height="2" fill="#b3b0a8"/><rect x="60" y="48" width="2" height="2" fill="#b5b0aa"/><rect x="62" y="48" width="2" height="2" fill="#b0aca3"/><rect x="64" y="48" width="2" height="2" fill="#b3aea8"/><rect x="66" y="48" width="2" height="2" fill="#a7a49b"/><rect x="68" y="48" width="2" height="2" fill="#aca9a0"/><rect x="70" y="48" width="2" height="2" fill="#a8a49a"/><rect x="72" y="48" width="2" height="2" fill="#d1cdc7"/><rect x="74" y="48" width="2" height="2" fill="#aca8a2"/><rect x="76" y="48" width="2" height="2" fill="#b4b1a8"/><rect x="78" y="48" width="2" height="2" fill="#afaaa1"/><rect x="80" y="48" width="2" height="2" fill="#b5b2aa"/><rect x="82" y="48" width="2" height="2" fill="#aaa49e"/><rect x="84" y="48" width="2" height="2" fill="#b4b0a7"/><rect x="86" y="48" width="2" height="2" fill="#aaa59d"/><rect x="88" y="48" width="2" height="2" fill="#b6b3aa"/><rect x="90" y="48" width="2" height="2" fill="#b2afa5"/><rect x="92" y="48" width="2" height="2" fill="#b7b4ad"/><rect x="94" y="48" width="2" height="2" fill="#b0aca3"/><rect x="96" y="48" width="2" height="2" fill="#aba8a0"/><rect x="98" y="48" width="2" height="2" fill="#b2b0a8"/><rect x="0" y="50" width="2" height="2" fill="#ca9d72"/><rect x="2" y="50" width="2" height="2" fill="#a68456"/><rect x="4" y="50" width="2" height="2" fill="#a6884e"/><rect x="6" y="50" width="2" height="2" fill="#aa885c"/><rect x="8" y="50" width="2" height="2" fill="#d3a47a"/><rect x="10" y="50" width="2" height="2" fill="#d3b77e"/><rect x="12" y="50" width="2" height="2" fill="#ab8b5c"/><rect x="14" y="50" width="2" height="2" fill="#e4bd8c"/><rect x="16" y="50" width="2" height="2" fill="#ceac7a"/><rect x="18" y="50" width="2" height="2" fill="#c2a274"/><rect x="20" y="50" width="2" height="2" fill="#9f7950"/><rect x="22" y="50" width="2" height="2" fill="#ab8659"/><rect x="24" y="50" width="2" height="2" fill="#dbba8d"/><rect x="26" y="50" width="2" height="2" fill="#e4bf8c"/><rect x="28" y="50" width="2" height="2" fill="#adaaa0"/><rect x="30" y="50" width="2" height="2" fill="#afa9a4"/><rect x="32" y="50" width="2" height="2" fill="#b7b4ac"/><rect x="34" y="50" width="2" height="2" fill="#b4b1a8"/><rect x="36" y="50" width="2" height="2" fill="#b9b4ab"/><rect x="38" y="50" width="2" height="2" fill="#b8b2ac"/><rect x="40" y="50" width="2" height="2" fill="#cecac2"/><rect x="42" y="50" width="2" height="2" fill="#afaba2"/><rect x="44" y="50" width="2" height="2" fill="#aca69d"/><rect x="46" y="50" width="2" height="2" fill="#adaaa3"/><rect x="48" y="50" width="2" height="2" fill="#b1afa5"/><rect x="50" y="50" width="2" height="2" fill="#aaa59d"/><rect x="52" y="50" width="2" height="2" fill="#b4b0a9"/><rect x="54" y="50" width="2" height="2" fill="#b9b3ab"/><rect x="56" y="50" width="2" height="2" fill="#a7a59c"/><rect x="58" y="50" width="2" height="2" fill="#afaba3"/><rect x="60" y="50" width="2" height="2" fill="#a9a69d"/><rect x="62" y="50" width="2" height="2" fill="#b2ada6"/><rect x="64" y="50" width="2" height="2" fill="#b8b3ab"/><rect x="66" y="50" width="2" height="2" fill="#b6b3a9"/><rect x="68" y="50" width="2" height="2" fill="#aeaaa4"/><rect x="70" y="50" width="2" height="2" fill="#b3b0a7"/><rect x="72" y="50" width="2" height="2" fill="#cdc8c1"/><rect x="74" y="50" width="2" height="2" fill="#aea8a1"/><rect x="76" y="50" width="2" height="2" fill="#a8a39c"/><rect x="78" y="50" width="2" height="2" fill="#b7b2ab"/><rect x="80" y="50" width="2" height="2" fill="#b3afa7"/><rect x="82" y="50" width="2" height="2" fill="#aaa69c"/><rect x="84" y="50" width="2" height="2" fill="#aba89e"/><rect x="86" y="50" width="2" height="2" fill="#a8a59a"/><rect x="88" y="50" width="2" height="2" fill="#aeaaa2"/><rect x="90" y="50" width="2" height="2" fill="#a7a39b"/><rect x="92" y="50" width="2" height="2" fill="#b5b1a8"/><rect x="94" y="50" width="2" height="2" fill="#b1ada5"/><rect x="96" y="50" width="2" height="2" fill="#b6b0a9"/><rect x="98" y="50" width="2" height="2" fill="#b7b4ab"/><rect x="0" y="52" width="2" height="2" fill="#c5a06c"/><rect x="2" y="52" width="2" height="2" fill="#a77c54"/><rect x="4" y="52" width="2" height="2" fill="#c59e74"/><rect x="6" y="52" width="2" height="2" fill="#d6b486"/><rect x="8" y="52" width="2" height="2" fill="#c39a72"/><rect x="10" y="52" width="2" height="2" fill="#b69367"/><rect x="12" y="52" width="2" height="2" fill="#dcb182"/><rect x="14" y="52" width="2" height="2" fill="#d2ab7c"/><rect x="16" y="52" width="2" height="2" fill="#ba9762"/><rect x="18" y="52" width="2" height="2" fill="#ba9362"/><rect x="20" y="52" width="2" height="2" fill="#b68d5c"/><rect x="22" y="52" width="2" height="2" fill="#c39766"/><rect x="24" y="52" width="2" height="2" fill="#ccb282"/><rect x="26" y="52" width="2" height="2" fill="#e1b589"/><rect x="28" y="52" width="2" height="2" fill="#b6b2ab"/><rect x="30" y="52" width="2" height="2" fill="#aeaaa2"/><rect x="32" y="52" width="2" height="2" fill="#afa9a2"/><rect x="34" y="52" width="2" height="2" fill="#b1ada4"/><rect x="36" y="52" width="2" height="2" fill="#a8a49c"/><rect x="38" y="52" width="2" height="2" fill="#a8a49c"/><rect x="40" y="52" width="2" height="2" fill="#cec9c2"/><rect x="42" y="52" width="2" height="2" fill="#aaa49b"/><rect x="44" y="52" width="2" height="2" fill="#aaa79e"/><rect x="46" y="52" width="2" height="2" fill="#b7b3aa"/><rect x="48" y="52" width="2" height="2" fill="#a9a59d"/><rect x="50" y="52" width="2" height="2" fill="#b7b1ab"/><rect x="52" y="52" width="2" height="2" fill="#b6b3ab"/><rect x="54" y="52" width="2" height="2" fill="#b9b5aa"/><rect x="56" y="52" width="2" height="2" fill="#a9a49c"/><rect x="58" y="52" width="2" height="2" fill="#a7a49c"/><rect x="60" y="52" width="2" height="2" fill="#aaa89f"/><rect x="62" y="52" width="2" height="2" fill="#a9a79f"/><rect x="64" y="52" width="2" height="2" fill="#a6a39b"/><rect x="66" y="52" width="2" height="2" fill="#b7b3ac"/><rect x="68" y="52" width="2" height="2" fill="#aca8a1"/><rect x="70" y="52" width="2" height="2" fill="#aba69e"/><rect x="72" y="52" width="2" height="2" fill="#cfcdc4"/><rect x="74" y="52" width="2" height="2" fill="#a8a49e"/><rect x="76" y="52" width="2" height="2" fill="#aea7a0"/><rect x="78" y="52" width="2" height="2" fill="#b7b2a9"/><rect x="80" y="52" width="2" height="2" fill="#b3aea5"/><rect x="82" y="52" width="2" height="2" fill="#aca9a1"/><rect x="84" y="52" width="2" height="2" fill="#b6b2a9"/><rect x="86" y="52" width="2" height="2" fill="#b6b2ac"/><rect x="88" y="52" width="2" height="2" fill="#adaaa3"/><rect x="90" y="52" width="2" height="2" fill="#aba79d"/><rect x="92" y="52" width="2" height="2" fill="#ada99f"/><rect x="94" y="52" width="2" height="2" fill="#adaca1"/><rect x="96" y="52" width="2" height="2" fill="#b3aca5"/><rect x="98" y="52" width="2" height="2" fill="#b5b0a8"/><rect x="0" y="54" width="2" height="2" fill="#a68048"/><rect x="2" y="54" width="2" height="2" fill="#cea373"/><rect x="4" y="54" width="2" height="2" fill="#b39763"/><rect x="6" y="54" width="2" height="2" fill="#b0925e"/><rect x="8" y="54" width="2" height="2" fill="#e3c397"/><rect x="10" y="54" width="2" height="2" fill="#c5a274"/><rect x="12" y="54" width="2" height="2" fill="#deb989"/><rect x="14" y="54" width="2" height="2" fill="#c09465"/><rect x="16" y="54" width="2" height="2" fill="#a68151"/><rect x="18" y="54" width="2" height="2" fill="#b1875a"/><rect x="20" y="54" width="2" height="2" fill="#d3b37a"/><rect x="22" y="54" width="2" height="2" fill="#bf9869"/><rect x="24" y="54" width="2" height="2" fill="#c6a779"/><rect x="26" y="54" width="2" height="2" fill="#aaa49b"/><rect x="28" y="54" width="2" height="2" fill="#adaaa1"/><rect x="30" y="54" width="2" height="2" fill="#b0ada6"/><rect x="32" y="54" width="2" height="2" fill="#b5b2aa"/><rect x="34" y="54" width="2" height="2" fill="#b1ada4"/><rect x="36" y="54" width="2" height="2" fill="#b7b1ab"/><rect x="38" y="54" width="2" height="2" fill="#b3afa8"/><rect x="40" y="54" width="2" height="2" fill="#cbc6c0"/><rect x="42" y="54" width="2" height="2" fill="#b7b1ab"/><rect x="44" y="54" width="2" height="2" fill="#b5b1aa"/><rect x="46" y="54" width="2" height="2" fill="#b0a9a3"/><rect x="48" y="54" width="2" height="2" fill="#b0aca6"/><rect x="50" y="54" width="2" height="2" fill="#a7a39a"/><rect x="52" y="54" width="2" height="2" fill="#a8a39d"/><rect x="54" y="54" width="2" height="2" fill="#b8b3ac"/><rect x="56" y="54" width="2" height="2" fill="#b2aba4"/><rect x="58" y="54" width="2" height="2" fill="#afaea3"/><rect x="60" y="54" width="2" height="2" fill="#b2afa5"/><rect x="62" y="54" width="2" height="2" fill="#a9a69f"/><rect x="64" y="54" width="2" height="2" fill="#aca7a0"/><rect x="66" y="54" width="2" height="2" fill="#a8a49b"/><rect x="68" y="54" width="2" height="2" fill="#ada8a0"/><rect x="70" y="54" width="2" height="2" fill="#ada9a2"/><rect x="72" y="54" width="2" height="2" fill="#cfcdc4"/><rect x="74" y="54" width="2" height="2" fill="#ada8a0"/><rect x="76" y="54" width="2" height="2" fill="#b6b4ac"/><rect x="78" y="54" width="2" height="2" fill="#b1aca4"/><rect x="80" y="54" width="2" height="2" fill="#b5b0aa"/><rect x="82" y="54" width="2" height="2" fill="#acaaa2"/><rect x="84" y="54" width="2" height="2" fill="#b3b1a9"/><rect x="86" y="54" width="2" height="2" fill="#b2aca4"/><rect x="88" y="54" width="2" height="2" fill="#a9a59d"/><rect x="90" y="54" width="2" height="2" fill="#aba79f"/><rect x="92" y="54" width="2" height="2" fill="#b7b2aa"/><rect x="94" y="54" width="2" height="2" fill="#b7b2ab"/><rect x="96" y="54" width="2" height="2" fill="#b3afa7"/><rect x="98" y="54" width="2" height="2" fill="#b5b2aa"/><rect x="0" y="56" width="2" height="2" fill="#be956d"/><rect x="2" y="56" width="2" height="2" fill="#c8a66c"/><rect x="4" y="56" width="2" height="2" fill="#b59865"/><rect x="6" y="56" width="2" height="2" fill="#a87b4e"/><rect x="8" y="56" width="2" height="2" fill="#a38152"/><rect x="10" y="56" width="2" height="2" fill="#dcbd86"/><rect x="12" y="56" width="2" height="2" fill="#c9a26e"/><rect x="14" y="56" width="2" height="2" fill="#eabb95"/><rect x="16" y="56" width="2" height="2" fill="#b08a5d"/><rect x="18" y="56" width="2" height="2" fill="#9f7c4d"/><rect x="20" y="56" width="2" height="2" fill="#e1bd8f"/><rect x="22" y="56" width="2" height="2" fill="#debc8f"/><rect x="24" y="56" width="2" height="2" fill="#aaa79f"/><rect x="26" y="56" width="2" height="2" fill="#b1aba4"/><rect x="28" y="56" width="2" height="2" fill="#afada3"/><rect x="30" y="56" width="2" height="2" fill="#a8a49d"/><rect x="32" y="56" width="2" height="2" fill="#b1aea4"/><rect x="34" y="56" width="2" height="2" fill="#b4b2a7"/><rect x="36" y="56" width="2" height="2" fill="#aaa59c"/><rect x="38" y="56" width="2" height="2" fill="#adaaa1"/><rect x="40" y="56" width="2" height="2" fill="#cbc5bd"/><rect x="42" y="56" width="2" height="2" fill="#afaba2"/><rect x="44" y="56" width="2" height="2" fill="#b7b2aa"/><rect x="46" y="56" width="2" height="2" fill="#aaa69c"/><rect x="48" y="56" width="2" height="2" fill="#aeaba3"/><rect x="50" y="56" width="2" height="2" fill="#acaa9f"/><rect x="52" y="56" width="2" height="2" fill="#afaba3"/><rect x="54" y="56" width="2" height="2" fill="#b0aaa4"/><rect x="56" y="56" width="2" height="2" fill="#b5afa8"/><rect x="58" y="56" width="2" height="2" fill="#a8a39b"/><rect x="60" y="56" width="2" height="2" fill="#a7a39c"/><rect x="62" y="56" width="2" height="2" fill="#b6b1aa"/><rect x="64" y="56" width="2" height="2" fill="#a8a49c"/><rect x="66" y="56" width="2" height="2" fill="#b9b5ab"/><rect x="68" y="56" width="2" height="2" fill="#a8a39d"/><rect x="70" y="56" width="2" height="2" fill="#a8a49b"/><rect x="72" y="56" width="2" height="2" fill="#c8c3bc"/><rect x="74" y="56" width="2" height="2" fill="#aba59d"/><rect x="76" y="56" width="2" height="2" fill="#b7b2a9"/><rect x="78" y="56" width="2" height="2" fill="#b3b2a7"/><rect x="80" y="56" width="2" height="2" fill="#b7b3ac"/><rect x="82" y="56" width="2" height="2" fill="#a9a49d"/><rect x="84" y="56" width="2" height="2" fill="#aea9a2"/><rect x="86" y="56" width="2" height="2" fill="#b7b5ac"/><rect x="88" y="56" width="2" height="2" fill="#b2afa7"/><rect x="90" y="56" width="2" height="2" fill="#b7b3ac"/><rect x="92" y="56" width="2" height="2" fill="#a9a49c"/><rect x="94" y="56" width="2" height="2" fill="#b0aaa2"/><rect x="96" y="56" width="2" height="2" fill="#b6b2a8"/><rect x="98" y="56" width="2" height="2" fill="#a9a59d"/>
</g>
<g filter="url(#bl2b)">
<g fill="#8c4636"><rect x="2.5" y="11" width="1.2" height="18"/><rect x="7.5" y="11" width="1.2" height="18"/><rect x="12.5" y="11" width="1.2" height="18"/><rect x="16.8" y="11" width="1" height="18"/><rect x="26.5" y="11" width="1" height="18"/><rect x="30.5" y="11" width="1" height="18"/></g>
<rect x="21.5" y="0" width="1.2" height="29" fill="#5e3c32"/>
<path d="M60 0L61.2 0L64.6 29L63.4 29Z" fill="#5a4a44"/>
<rect x="77" y="0" width="1.4" height="30" fill="#463e38"/>
<rect x="94" y="0" width="2" height="40" fill="#4a4440"/>
<rect x="72.5" y="37" width="2" height="21" fill="#d8d4cc" opacity="0.8"/>
<rect x="0" y="0" width="99" height="1" fill="#5a4a42"/>
<rect x="0" y="0" width="1.2" height="58" fill="#4a4040"/>
</g></g>
</svg>

<!-- Адрес photo -->
<svg class="a" style="left:534px;top:100px" width="99" height="60" viewBox="0 0 99 60">
<defs><filter id="bl3" x="-5%" y="-5%" width="110%" height="110%"><feGaussianBlur stdDeviation="0.55"/></filter>
<linearGradient id="plk1" x1="0" y1="0" x2="0" y2="1"><stop offset="0" stop-color="#d6c2aa"/><stop offset="1" stop-color="#c6ae94"/></linearGradient>
<linearGradient id="plk2" x1="0" y1="0" x2="0" y2="1"><stop offset="0" stop-color="#d2bca2"/><stop offset="1" stop-color="#bea68a"/></linearGradient>
<linearGradient id="sgn" x1="0" y1="0" x2="0" y2="1"><stop offset="0" stop-color="#3c5478"/><stop offset="0.25" stop-color="#2b3f62"/><stop offset="1" stop-color="#253756"/></linearGradient>
<clipPath id="c3"><rect width="99" height="60"/></clipPath></defs>
<g clip-path="url(#c3)"><g filter="url(#bl3)">
<rect x="-2" y="-2" width="103" height="64" fill="#c9b197"/>
<rect x="-2" y="3" width="103" height="20" fill="url(#plk1)"/>
<rect x="-2" y="26" width="103" height="24" fill="url(#plk2)"/>
<rect x="-2" y="-2" width="103" height="5.5" fill="#3e3028"/>
<rect x="-2" y="21.5" width="103" height="4.5" fill="#4f4036"/>
<rect x="-2" y="49.5" width="103" height="3.5" fill="#5c4a3c"/>
<rect x="-2" y="53" width="103" height="9" fill="#c0a68a"/>
<rect x="-2" y="3" width="5" height="59" fill="#9e8870"/>
<rect x="86" y="3" width="2.5" height="19" fill="#a9927a"/>
<rect x="86" y="26" width="2.5" height="24" fill="#a9927a"/>
<rect x="59" y="49" width="11" height="13" fill="#2f2a27"/>
<rect x="59" y="30" width="10" height="8" fill="#2b2724"/>
<path d="M16 12Q17 8.5 22 8H73Q79 8.5 80 12V32H16Z" fill="url(#sgn)"/>
<path d="M19 9.2H76" stroke="#8ca0c0" stroke-width="1"/>
<text x="49" y="20.6" font-family="Liberation Sans" font-weight="bold" font-size="8" fill="#ffffff" text-anchor="middle" textLength="53.5" lengthAdjust="spacingAndGlyphs">МИЛЛИОННАЯ</text>
<rect x="43" y="23" width="9" height="2" fill="#b9c6da"/>
<rect x="37.5" y="27.6" width="23" height="1.4" fill="#8193b0"/>
<path d="M14 37H84V51.3H14Z" fill="#283a5a"/>
<path d="M14 37.3H84" stroke="#6f83a4" stroke-width="1.2"/>
<path d="M14 50.8H84" stroke="#4a5d80" stroke-width="1"/>
<text x="48.2" y="47.8" font-family="Liberation Sans" font-weight="bold" font-size="11.5" fill="#ffffff" text-anchor="middle" textLength="12.5" lengthAdjust="spacingAndGlyphs">38</text>
<rect x="26" y="42.5" width="3.5" height="2" fill="#aab6c8"/>
<rect x="65.5" y="42.5" width="4" height="2" fill="#aab6c8"/>
</g></g>
</svg>

<!-- labels -->


<!-- status bar -->
<div class="a" style="left:0;top:559px;width:1024px;height:15px;background:#353535"></div>
<div class="a" style="left:64px;top:563px;width:1px;height:9px;background:#aaa"></div>

<svg class="a" style="left:990px;top:559px" width="34" height="15" viewBox="0 0 34 15">
<rect x="3.5" y="2.5" width="5" height="10" fill="#111"/>
<rect x="4.7" y="3" width="3.2" height="9" fill="#f0f0f0"/>
<g fill="#7a7a7a"><rect x="9" y="4" width="2.5" height="1.2"/><rect x="13" y="4" width="2.7" height="1.2"/><rect x="9" y="7" width="2.5" height="1.2"/><rect x="13" y="7" width="2.7" height="1.2"/><rect x="9" y="10" width="2.5" height="1.2"/><rect x="13" y="10" width="2.7" height="1.2"/></g>
<rect x="17.5" y="0.5" width="15" height="15" fill="#474747" stroke="#6e6e6e" stroke-width="1"/>
<rect x="21" y="4.8" width="9.2" height="7.2" fill="#e2eef6"/>
<path d="M21.5 10.5Q23 8.5 25 9.3Q27 9.8 30 9.5V11.5H21.5Z" fill="#2a4a64"/>
</svg>
<!-- texts -->
<div class="t" style="left:319.86px;top:4.93px;font-size:8.50px;color:#ffffff;transform:scaleX(0.935);transform-origin:0 0">ПРОБЛЕМЫ СКЛАДСКОЙ ЛОГИСТИКИ</div>
<div class="t" style="left:99.0px;top:44.91px;font-size:8.50px;color:#ffffff;transform:scaleX(0.940);transform-origin:0 0">ПРОБЛЕМЫ СКЛАДСКОЙ ЛОГИСТИКИ</div>
<div class="t" style="left:810.76px;top:45.03px;font-size:8.50px;color:#9c9c9c;transform:scaleX(0.946);transform-origin:0 0">Поиск в: ПРОБЛЕМЫ СКЛАДСКОЙ ЛОГИСТИКИ</div>
<div class="t" style="left:7.82px;top:23.71px;font-size:7.90px;color:#ffffff;transform:scaleX(1.010);transform-origin:0 0">Файл</div>
<div class="t" style="left:46.18px;top:23.71px;font-size:7.90px;color:#ffffff;transform:scaleX(0.975);transform-origin:0 0">Главная</div>
<div class="t" style="left:94.68px;top:23.71px;font-size:7.90px;color:#ffffff;transform:scaleX(0.988);transform-origin:0 0">Поделиться</div>
<div class="t" style="left:157.18px;top:23.71px;font-size:7.90px;color:#ffffff;transform:scaleX(0.985);transform-origin:0 0">Вид</div>
<div class="t" style="left:191.81px;top:23.61px;font-size:7.90px;color:#ffffff;transform:scaleX(0.988);transform-origin:0 0">Средства работы с рисунками</div>
<div class="t" style="left:224.26px;top:7.1px;font-size:7.60px;color:#000000;-webkit-text-stroke:0.2px #000;transform:scaleX(1.044);transform-origin:0 0">Управление</div>
<div class="t" style="left:29.74px;top:78.95px;font-size:9.00px;color:#ffffff;transform:scaleX(0.911);transform-origin:0 0">Быстрый доступ</div>
<div class="t" style="left:29.70px;top:101.00px;font-size:9.00px;color:#ffffff;transform:scaleX(0.894);transform-origin:0 0">OneDrive - Personal</div>
<div class="t" style="left:29.68px;top:123.06px;font-size:9.00px;color:#ffffff;transform:scaleX(0.928);transform-origin:0 0">Этот компьютер</div>
<div class="t" style="left:29.70px;top:145.00px;font-size:9.00px;color:#ffffff;transform:scaleX(0.892);transform-origin:0 0">Сеть</div>
<div class="t" style="left:7.80px;top:563.13px;font-size:8.40px;color:#dddddd;transform:scaleX(0.942);transform-origin:0 0">Элементов: 5</div>
<div class="t lbl" style="left:130.07px;top:164.92px;font-size:15.40px;color:#ffffff;transform:scaleX(0.918);transform-origin:0 0">ПРОБЛЕМЫ</div>
<div class="t lbl" style="left:229.8px;top:164.92px;font-size:15.40px;color:#ffffff;transform:scaleX(0.879);transform-origin:0 0">РЕШЕНИЕ</div>
<div class="t lbl" style="left:339.11px;top:164.92px;font-size:15.40px;color:#ffffff;transform:scaleX(0.970);transform-origin:0 0">Часы</div>
<div class="t lbl" style="left:447.97px;top:164.92px;font-size:15.40px;color:#ffffff;transform:scaleX(0.955);transform-origin:0 0">Склад</div>
<div class="t lbl" style="left:560.60px;top:164.92px;font-size:15.40px;color:#ffffff;transform:scaleX(0.958);transform-origin:0 0">Адрес</div>
<!-- cursor -->
<svg class="a" style="left:298px;top:177px" width="13" height="19" viewBox="0 0 13 19">
<path d="M1 1V15.5L4.6 12.2L7.2 18L9.4 17L6.9 11.3H11.6Z" fill="#fff" stroke="#000" stroke-width="1"/>
</svg>
</body></html>
